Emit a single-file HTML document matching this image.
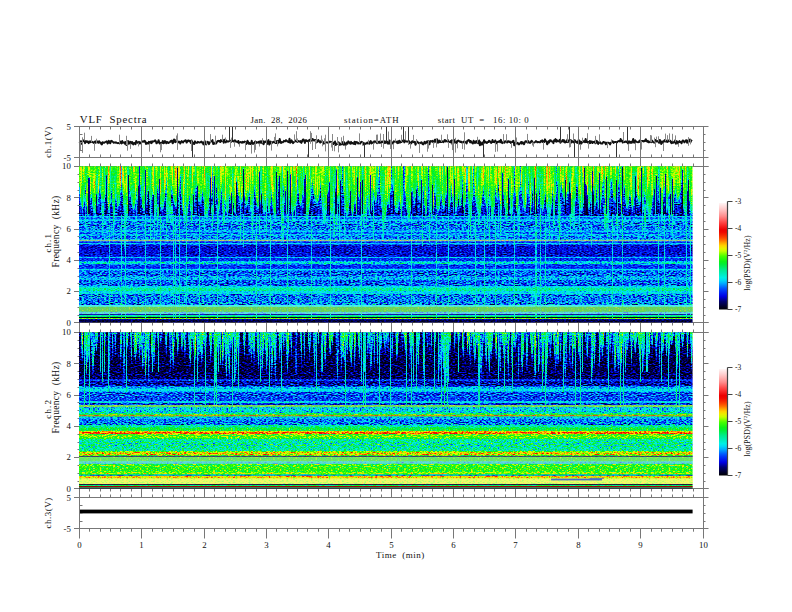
<!DOCTYPE html><html><head><meta charset="utf-8"><style>html,body{margin:0;padding:0;background:#fff;width:792px;height:612px;overflow:hidden}svg{display:block}text{font-family:"Liberation Serif",serif;fill:#111}</style></head><body>
<svg width="792" height="612" viewBox="0 0 792 612">
<rect width="792" height="612" fill="#fff"/>
<polyline points="79.5 143.0 80.2 141.4 80.9 141.3 81.6 143.9 82.3 141.5 83.0 140.2 83.7 141.3 84.4 140.7 85.1 143.2 85.8 141.3 86.5 141.2 87.2 142.0 87.9 141.3 88.6 143.2 89.3 142.5 90.0 141.2 90.7 142.3 91.4 141.6 92.1 141.7 92.8 142.2 93.5 142.9 94.2 142.0 94.9 141.6 95.6 142.8 96.3 141.0 97.0 142.3 97.7 141.5 98.4 142.8 99.1 141.2 99.8 142.6 100.5 142.4 101.2 143.9 101.9 144.4 102.6 142.1 103.3 142.6 104.0 142.9 104.7 142.4 105.4 142.0 106.1 141.7 106.8 141.3 107.5 143.5 108.2 142.8 108.9 140.8 109.6 142.5 110.3 143.3 111.0 141.0 111.7 140.8 112.4 141.7 113.1 142.0 113.8 142.8 114.5 142.4 115.2 142.8 115.9 142.3 116.6 142.8 117.3 143.2 118.0 143.0 118.7 143.2 119.4 143.5 120.1 141.4 120.8 142.3 121.5 143.4 122.2 141.0 122.9 142.7 123.6 142.6 124.3 142.3 125.0 143.8 125.7 141.9 126.4 145.1 127.1 141.2 127.8 144.3 128.5 141.1 129.2 142.6 129.9 143.6 130.6 141.8 131.3 143.2 132.0 141.9 132.7 143.9 133.4 144.5 134.1 142.8 134.8 143.4 135.5 144.2 136.2 140.9 136.9 142.0 137.6 142.8 138.3 142.9 139.0 141.7 139.7 143.5 140.4 143.4 141.1 142.2 141.8 142.0 142.5 141.5 143.2 141.1 143.9 141.8 144.6 140.8 145.3 141.4 146.0 144.0 146.7 142.8 147.4 143.3 148.1 143.6 148.8 141.8 149.5 143.4 150.2 141.8 150.9 141.5 151.6 143.2 152.3 141.3 153.0 141.7 153.7 141.3 154.4 141.3 155.1 140.3 155.8 141.2 156.5 143.4 157.2 142.2 157.9 142.5 158.6 140.1 159.3 142.7 160.0 143.7 160.7 142.7 161.4 143.3 162.1 143.0 162.8 140.9 163.5 143.3 164.2 143.0 164.9 141.0 165.6 142.0 166.3 143.3 167.0 141.8 167.7 142.2 168.4 143.1 169.1 142.5 169.8 142.4 170.5 141.1 171.2 141.6 171.9 140.5 172.6 143.4 173.3 142.6 174.0 139.5 174.7 139.6 175.4 142.2 176.1 141.5 176.8 140.7 177.5 141.0 178.2 142.4 178.9 141.7 179.6 141.8 180.3 143.6 181.0 142.2 181.7 141.1 182.4 141.8 183.1 142.5 183.8 141.1 184.5 141.1 185.2 140.3 185.9 140.4 186.6 142.6 187.3 141.7 188.0 140.4 188.7 140.5 189.4 141.3 190.1 140.9 190.8 143.0 191.5 140.4 192.2 142.1 192.9 142.6 193.6 143.8 194.3 144.0 195.0 141.3 195.7 142.5 196.4 142.9 197.1 142.9 197.8 141.8 198.5 142.1 199.2 142.5 199.9 142.5 200.6 142.0 201.3 141.6 202.0 142.6 202.7 142.4 203.4 144.4 204.1 142.6 204.8 141.0 205.5 144.0 206.2 144.4 206.9 142.2 207.6 141.7 208.3 142.2 209.0 144.2 209.7 142.6 210.4 142.1 211.1 141.4 211.8 141.0 212.5 140.1 213.2 144.1 213.9 143.4 214.6 143.7 215.3 142.3 216.0 143.6 216.7 142.5 217.4 141.1 218.1 140.8 218.8 141.3 219.5 140.9 220.2 142.1 220.9 140.1 221.6 141.2 222.3 140.8 223.0 140.3 223.7 142.8 224.4 139.8 225.1 141.0 225.8 142.4 226.5 140.6 227.2 141.5 227.9 141.7 228.6 141.5 229.3 141.1 230.0 140.7 230.7 140.6 231.4 141.7 232.1 139.6 232.8 141.1 233.5 141.2 234.2 141.7 234.9 140.2 235.6 141.5 236.3 141.7 237.0 141.5 237.7 142.3 238.4 140.9 239.1 143.4 239.8 142.3 240.5 142.0 241.2 142.2 241.9 142.8 242.6 141.7 243.3 142.5 244.0 142.1 244.7 141.5 245.4 141.9 246.1 144.1 246.8 143.5 247.5 140.7 248.2 141.9 248.9 143.8 249.6 143.0 250.3 144.0 251.0 144.2 251.7 140.7 252.4 143.8 253.1 142.9 253.8 143.8 254.5 142.7 255.2 141.4 255.9 143.2 256.6 142.1 257.3 142.5 258.0 142.4 258.7 141.8 259.4 143.4 260.1 141.2 260.8 142.4 261.5 141.3 262.2 143.3 262.9 140.9 263.6 144.3 264.3 142.2 265.0 141.5 265.7 142.0 266.4 141.0 267.1 144.0 267.8 142.2 268.5 140.1 269.2 144.6 269.9 142.5 270.6 141.6 271.3 143.8 272.0 142.2 272.7 142.5 273.4 141.8 274.1 141.5 274.8 142.5 275.5 143.1 276.2 143.0 276.9 141.0 277.6 143.5 278.3 140.9 279.0 142.5 279.7 139.0 280.4 141.8 281.1 143.0 281.8 142.0 282.5 142.3 283.2 142.2 283.9 140.8 284.6 141.3 285.3 141.4 286.0 140.1 286.7 140.7 287.4 141.5 288.1 141.9 288.8 142.2 289.5 138.7 290.2 142.9 290.9 142.3 291.6 140.3 292.3 141.7 293.0 143.2 293.7 142.3 294.4 141.6 295.1 141.6 295.8 140.5 296.5 141.0 297.2 142.0 297.9 141.6 298.6 141.0 299.3 141.3 300.0 141.9 300.7 141.0 301.4 142.9 302.1 141.3 302.8 139.7 303.5 139.4 304.2 141.1 304.9 142.9 305.6 140.1 306.3 140.1 307.0 141.1 307.7 141.4 308.4 140.8 309.1 140.1 309.8 141.0 310.5 139.2 311.2 140.2 311.9 140.8 312.6 139.0 313.3 139.8 314.0 140.5 314.7 139.9 315.4 140.0 316.1 142.5 316.8 141.1 317.5 141.9 318.2 140.0 318.9 140.8 319.6 141.6 320.3 142.6 321.0 141.4 321.7 140.4 322.4 142.0 323.1 141.9 323.8 143.7 324.5 143.3 325.2 142.5 325.9 142.3 326.6 142.4 327.3 142.7 328.0 142.4 328.7 142.5 329.4 141.7 330.1 141.8 330.8 141.9 331.5 142.2 332.2 143.4 332.9 142.5 333.6 144.1 334.3 143.2 335.0 141.5 335.7 145.0 336.4 144.2 337.1 144.0 337.8 142.5 338.5 142.3 339.2 142.9 339.9 144.9 340.6 143.8 341.3 144.4 342.0 142.0 342.7 143.6 343.4 144.7 344.1 142.2 344.8 143.8 345.5 145.4 346.2 143.3 346.9 142.5 347.6 143.7 348.3 141.3 349.0 142.1 349.7 142.9 350.4 143.8 351.1 141.8 351.8 143.4 352.5 142.9 353.2 143.6 353.9 143.9 354.6 141.6 355.3 144.3 356.0 141.9 356.7 142.6 357.4 142.3 358.1 143.6 358.8 143.2 359.5 142.6 360.2 143.6 360.9 142.1 361.6 141.7 362.3 142.3 363.0 142.6 363.7 144.5 364.4 143.3 365.1 144.0 365.8 143.4 366.5 143.5 367.2 142.4 367.9 143.5 368.6 142.9 369.3 143.7 370.0 141.9 370.7 141.0 371.4 143.6 372.1 142.3 372.8 142.8 373.5 143.1 374.2 141.3 374.9 141.6 375.6 141.4 376.3 142.4 377.0 143.2 377.7 141.9 378.4 141.8 379.1 142.9 379.8 141.5 380.5 141.6 381.2 143.2 381.9 141.4 382.6 142.1 383.3 141.6 384.0 143.2 384.7 141.3 385.4 142.9 386.1 141.5 386.8 141.7 387.5 143.5 388.2 141.4 388.9 143.7 389.6 140.5 390.3 143.5 391.0 142.6 391.7 143.6 392.4 142.4 393.1 143.4 393.8 141.2 394.5 141.6 395.2 141.6 395.9 141.7 396.6 141.6 397.3 143.2 398.0 141.2 398.7 142.9 399.4 140.7 400.1 142.6 400.8 141.8 401.5 142.1 402.2 140.6 402.9 140.7 403.6 140.8 404.3 142.4 405.0 140.3 405.7 141.2 406.4 141.6 407.1 141.4 407.8 141.8 408.5 141.4 409.2 141.2 409.9 143.2 410.6 142.6 411.3 143.4 412.0 141.4 412.7 141.2 413.4 142.1 414.1 142.2 414.8 141.7 415.5 144.8 416.2 143.4 416.9 141.3 417.6 142.4 418.3 142.4 419.0 143.4 419.7 143.3 420.4 143.0 421.1 142.3 421.8 142.4 422.5 144.1 423.2 144.4 423.9 143.1 424.6 141.8 425.3 143.6 426.0 142.5 426.7 141.5 427.4 143.2 428.1 141.1 428.8 142.3 429.5 144.3 430.2 141.0 430.9 141.6 431.6 141.3 432.3 140.8 433.0 142.1 433.7 142.5 434.4 140.6 435.1 139.5 435.8 141.9 436.5 141.4 437.2 139.3 437.9 142.9 438.6 142.3 439.3 140.6 440.0 142.2 440.7 141.2 441.4 142.0 442.1 141.2 442.8 141.8 443.5 142.3 444.2 140.9 444.9 139.9 445.6 141.5 446.3 141.0 447.0 141.3 447.7 139.9 448.4 142.0 449.1 142.1 449.8 142.0 450.5 141.1 451.2 142.6 451.9 140.3 452.6 144.5 453.3 141.0 454.0 139.8 454.7 141.3 455.4 143.1 456.1 141.4 456.8 142.9 457.5 141.0 458.2 140.5 458.9 141.2 459.6 141.2 460.3 142.0 461.0 141.5 461.7 142.6 462.4 142.5 463.1 142.6 463.8 141.4 464.5 141.4 465.2 142.1 465.9 142.5 466.6 143.4 467.3 140.8 468.0 140.8 468.7 139.9 469.4 140.5 470.1 142.3 470.8 141.0 471.5 142.6 472.2 142.7 472.9 143.5 473.6 140.6 474.3 142.5 475.0 143.2 475.7 141.6 476.4 141.1 477.1 142.8 477.8 141.4 478.5 143.3 479.2 140.5 479.9 145.4 480.6 142.3 481.3 144.6 482.0 144.6 482.7 142.5 483.4 142.9 484.1 140.1 484.8 142.7 485.5 141.7 486.2 142.4 486.9 143.1 487.6 142.0 488.3 142.0 489.0 140.7 489.7 141.1 490.4 142.1 491.1 143.0 491.8 142.4 492.5 140.0 493.2 142.1 493.9 141.7 494.6 142.2 495.3 140.4 496.0 142.6 496.7 143.3 497.4 141.8 498.1 142.0 498.8 141.4 499.5 141.1 500.2 142.3 500.9 139.8 501.6 142.5 502.3 143.2 503.0 142.4 503.7 141.6 504.4 142.8 505.1 141.2 505.8 141.5 506.5 141.2 507.2 142.4 507.9 141.3 508.6 141.2 509.3 142.0 510.0 141.6 510.7 142.9 511.4 142.1 512.1 142.1 512.8 141.1 513.5 140.8 514.2 145.4 514.9 143.5 515.6 142.7 516.3 143.6 517.0 143.1 517.7 142.7 518.4 144.4 519.1 144.3 519.8 143.5 520.5 142.9 521.2 141.9 521.9 143.7 522.6 142.2 523.3 143.1 524.0 144.3 524.7 142.6 525.4 141.3 526.1 141.2 526.8 141.9 527.5 142.6 528.2 141.0 528.9 142.4 529.6 142.9 530.3 142.9 531.0 141.4 531.7 140.7 532.4 142.2 533.1 142.6 533.8 142.8 534.5 142.4 535.2 142.0 535.9 141.1 536.6 141.5 537.3 142.4 538.0 142.1 538.7 142.0 539.4 142.4 540.1 142.4 540.8 141.0 541.5 141.4 542.2 140.2 542.9 142.1 543.6 141.3 544.3 142.0 545.0 139.3 545.7 141.1 546.4 141.3 547.1 144.4 547.8 143.2 548.5 141.2 549.2 142.4 549.9 140.1 550.6 140.1 551.3 141.3 552.0 141.5 552.7 141.4 553.4 143.2 554.1 140.1 554.8 141.0 555.5 139.1 556.2 141.8 556.9 140.1 557.6 141.4 558.3 141.2 559.0 141.3 559.7 139.7 560.4 142.9 561.1 141.6 561.8 141.5 562.5 140.1 563.2 141.4 563.9 140.1 564.6 142.4 565.3 142.5 566.0 141.3 566.7 142.1 567.4 139.4 568.1 142.2 568.8 140.7 569.5 141.5 570.2 140.1 570.9 140.1 571.6 142.5 572.3 141.6 573.0 141.0 573.7 142.4 574.4 140.1 575.1 140.3 575.8 142.0 576.5 141.8 577.2 142.9 577.9 141.9 578.6 140.1 579.3 140.5 580.0 143.9 580.7 141.7 581.4 143.5 582.1 142.0 582.8 141.0 583.5 141.8 584.2 141.3 584.9 142.3 585.6 138.9 586.3 142.1 587.0 140.8 587.7 142.6 588.4 142.1 589.1 143.3 589.8 140.9 590.5 143.0 591.2 141.7 591.9 141.4 592.6 143.1 593.3 141.9 594.0 142.0 594.7 141.4 595.4 143.3 596.1 142.6 596.8 140.8 597.5 142.9 598.2 143.9 598.9 142.2 599.6 141.6 600.3 143.0 601.0 143.6 601.7 143.2 602.4 143.6 603.1 142.2 603.8 141.9 604.5 142.5 605.2 142.4 605.9 144.3 606.6 142.6 607.3 142.7 608.0 142.9 608.7 142.7 609.4 143.3 610.1 144.4 610.8 142.8 611.5 142.4 612.2 141.3 612.9 141.4 613.6 142.9 614.3 142.3 615.0 141.9 615.7 141.9 616.4 142.2 617.1 142.3 617.8 141.4 618.5 141.2 619.2 141.0 619.9 141.6 620.6 138.9 621.3 141.1 622.0 140.5 622.7 142.6 623.4 141.7 624.1 141.8 624.8 142.2 625.5 141.5 626.2 141.5 626.9 142.3 627.6 142.8 628.3 143.7 629.0 141.3 629.7 141.5 630.4 142.8 631.1 141.9 631.8 142.8 632.5 141.2 633.2 139.0 633.9 142.5 634.6 142.7 635.3 140.3 636.0 141.7 636.7 141.7 637.4 142.1 638.1 142.3 638.8 142.0 639.5 140.6 640.2 142.0 640.9 141.0 641.6 141.4 642.3 140.9 643.0 141.0 643.7 141.5 644.4 140.7 645.1 141.1 645.8 139.2 646.5 140.8 647.2 141.7 647.9 140.8 648.6 142.3 649.3 142.2 650.0 141.8 650.7 140.9 651.4 142.2 652.1 140.6 652.8 141.8 653.5 142.3 654.2 142.7 654.9 141.6 655.6 139.9 656.3 141.3 657.0 141.6 657.7 141.0 658.4 141.6 659.1 142.9 659.8 140.0 660.5 140.7 661.2 144.0 661.9 142.5 662.6 141.4 663.3 142.7 664.0 140.9 664.7 140.1 665.4 141.2 666.1 141.7 666.8 140.6 667.5 142.0 668.2 140.4 668.9 141.3 669.6 140.6 670.3 140.7 671.0 142.7 671.7 143.2 672.4 141.4 673.1 142.7 673.8 142.6 674.5 141.9 675.2 140.3 675.9 143.7 676.6 141.2 677.3 141.5 678.0 143.4 678.7 142.0 679.4 141.1 680.1 142.1 680.8 142.0 681.5 143.3 682.2 141.4 682.9 140.4 683.6 141.1 684.3 142.4 685.0 141.8 685.7 140.4 686.4 140.2 687.1 142.8 687.8 141.2 688.5 139.9 689.2 141.5 689.9 139.5 690.6 142.0 691.3 140.4 692.0 141.1" fill="none" stroke="#111" stroke-width="1.9" stroke-linejoin="round"/>
<path d="M234.5 141.7v5.0M543.5 142.1v7.5M427.5 143.2v8.5M82.5 141.5v3.4M130.5 143.6v5.3M311.5 140.2v-7.3M455.5 141.3v-3.5M667.5 140.6v-5.4M390.5 140.5v8.5M408.5 141.8v3.2M567.5 142.1v-7.9M96.5 142.8v-4.1M294.5 141.6v-7.2M410.5 143.2v5.4M599.5 142.2v-7.9M464.5 141.4v8.3M312.5 140.8v9.2M688.5 141.2v-4.1M215.5 143.7v-8.0M297.5 142.0v-3.5M383.5 141.6v7.0M428.5 141.1v3.9M623.5 141.7v-9.7M533.5 142.6v4.2M373.5 142.8v6.8M91.5 142.3v-6.4M595.5 143.3v-7.4M331.5 142.2v5.3M259.5 143.4v3.1M338.5 142.5v9.9M457.5 142.9v5.4M532.5 142.2v3.3M655.5 141.6v5.6M239.5 143.4v3.3M126.5 145.1v-9.3M441.5 141.2v-6.5M607.5 142.6v5.5M380.5 141.5v-6.6M191.5 143.0v8.0M452.5 140.3v9.8M160.5 143.7v8.6M448.5 142.0v5.9M149.5 143.4v8.2M332.5 143.4v-9.4M582.5 142.0v-4.3M245.5 141.9v8.3M275.5 143.1v-9.7M161.5 143.3v6.8M80.5 143.0v7.5M225.5 141.0v-3.5M436.5 141.4v6.0M497.5 143.3v8.2M641.5 141.0v8.5M337.5 144.0v-7.0M343.5 143.6v-7.8M455.5 143.1v9.5M206.5 144.4v-3.5M413.5 141.2v-6.3M325.5 142.5v8.9M310.5 139.2v-8.0M380.5 141.5v-8.0M672.5 141.4v-7.6M377.5 143.2v-5.6M177.5 141.0v-7.6M262.5 143.3v-5.1M675.5 141.9v-6.5M516.5 143.6v-6.1M138.5 142.8v3.6M511.5 142.9v4.9M277.5 141.0v5.4M231.5 141.7v-4.1M393.5 143.4v5.8M381.5 143.2v3.8M176.5 141.5v-6.0M275.5 142.5v-6.6M191.5 140.4v8.8M405.5 140.3v-9.1M611.5 142.8v-3.5M651.5 142.2v-6.8M325.5 142.5v-7.8M341.5 143.8v-6.5M477.5 142.8v-6.0M82.5 143.9v-6.6M573.5 141.0v-7.5M84.5 140.7v-8.0M271.5 141.6v9.0M255.5 141.4v8.5M495.5 142.2v9.7M580.5 143.9v5.8M324.5 143.3v-5.0M628.5 143.7v7.2M254.5 143.8v8.7M94.5 142.9v7.9M436.5 141.9v-3.6M210.5 142.6v-8.5M678.5 143.4v3.4M322.5 140.4v5.9M119.5 143.5v-8.8M332.5 143.4v7.5M462.5 142.6v6.4M251.5 144.2v9.4M345.5 145.4v4.2M669.5 141.3v-7.9M296.5 141.0v-9.8M506.5 141.5v-7.3M447.5 141.3v-7.0M316.5 142.5v-7.2M368.5 143.5v-3.6M177.5 141.0v8.9M222.5 141.2v-6.5M650.5 141.8v-6.8M274.5 141.5v-4.6M230.5 140.7v7.2M690.5 139.5v4.9M315.5 139.9v9.1M408.5 141.8v-3.9M376.5 142.4v-7.7M359.5 143.2v-9.8M362.5 142.3v3.5M82.5 143.9v9.0M377.5 143.2v-8.7M663.5 142.7v8.3M127.5 141.2v9.5M570.5 140.1v7.0M588.5 142.6v6.0M383.5 142.1v-8.1M416.5 143.4v-4.3M578.5 141.9v3.9M665.5 141.2v-7.6M587.5 140.8v-7.6M656.5 139.9v-3.3M433.5 142.1v5.8M441.5 142.0v-6.8M334.5 144.1v7.2M321.5 141.4v-5.9M635.5 142.7v7.5M331.5 142.2v4.6M401.5 141.8v-7.0M688.5 141.2v4.6M419.5 143.4v9.5M569.5 140.7v6.9M464.5 141.4v-9.1M503.5 142.4v-8.3M428.5 141.1v7.5M395.5 141.6v-3.0M310.5 139.2v4.6M388.5 141.4v-9.9M527.5 142.6v-8.7M658.5 141.6v-5.3M654.5 142.3v-4.7" stroke="#888" stroke-width="1" fill="none"/>
<path d="M364.5 143.3V157.0M574.5 140.1V157.0M569.5 141.5V127.0M229.5 141.5V127.0M560.5 142.9V127.0M627.5 142.3V127.0M616.5 142.2V157.0M483.5 142.5V157.0M192.5 142.1V157.0M408.5 141.4V127.0M386.5 141.5V127.0M308.5 141.4V157.0M232.5 139.6V127.0M403.5 140.7V127.0" stroke="#333" stroke-width="1" fill="none"/>
<rect x="79.0" y="509.6" width="613.6" height="3.8" fill="#000"/>
<path d="M74 126.5H708.5M74 157.5H708.5M74 497.5H708.5M74 528.5H708.5M74 166.5H708.5M74 332.5H708.5M74 322.5H708.5M74 488.5H708.5M79.5 126.5V528.5M703.5 126.5V528.5M79.5 528.5v10.0M89.5 126.5v3.0M89.5 157.5v-3.0M89.5 166.5v-3.0M89.5 322.5v3.0M89.5 332.5v-3.0M89.5 488.5v3.0M89.5 497.5v-3.0M89.5 528.5v3.2M100.5 126.5v3.0M100.5 157.5v-3.0M100.5 166.5v-3.0M100.5 322.5v3.0M100.5 332.5v-3.0M100.5 488.5v3.0M100.5 497.5v-3.0M100.5 528.5v3.2M110.5 126.5v3.0M110.5 157.5v-3.0M110.5 166.5v-3.0M110.5 322.5v3.0M110.5 332.5v-3.0M110.5 488.5v3.0M110.5 497.5v-3.0M110.5 528.5v3.2M120.5 126.5v3.0M120.5 157.5v-3.0M120.5 166.5v-3.0M120.5 322.5v3.0M120.5 332.5v-3.0M120.5 488.5v3.0M120.5 497.5v-3.0M120.5 528.5v3.2M131.5 126.5v3.0M131.5 157.5v-3.0M131.5 166.5v-3.0M131.5 322.5v3.0M131.5 332.5v-3.0M131.5 488.5v3.0M131.5 497.5v-3.0M131.5 528.5v3.2M141.5 126.5V157.5M141.5 157.5V166.0M141.5 322.5V332.0M141.5 488.5V497.5M141.5 528.5v10.0M152.5 126.5v3.0M152.5 157.5v-3.0M152.5 166.5v-3.0M152.5 322.5v3.0M152.5 332.5v-3.0M152.5 488.5v3.0M152.5 497.5v-3.0M152.5 528.5v3.2M162.5 126.5v3.0M162.5 157.5v-3.0M162.5 166.5v-3.0M162.5 322.5v3.0M162.5 332.5v-3.0M162.5 488.5v3.0M162.5 497.5v-3.0M162.5 528.5v3.2M173.5 126.5v3.0M173.5 157.5v-3.0M173.5 166.5v-3.0M173.5 322.5v3.0M173.5 332.5v-3.0M173.5 488.5v3.0M173.5 497.5v-3.0M173.5 528.5v3.2M183.5 126.5v3.0M183.5 157.5v-3.0M183.5 166.5v-3.0M183.5 322.5v3.0M183.5 332.5v-3.0M183.5 488.5v3.0M183.5 497.5v-3.0M183.5 528.5v3.2M194.5 126.5v3.0M194.5 157.5v-3.0M194.5 166.5v-3.0M194.5 322.5v3.0M194.5 332.5v-3.0M194.5 488.5v3.0M194.5 497.5v-3.0M194.5 528.5v3.2M204.5 126.5V157.5M204.5 157.5V166.0M204.5 322.5V332.0M204.5 488.5V497.5M204.5 528.5v10.0M214.5 126.5v3.0M214.5 157.5v-3.0M214.5 166.5v-3.0M214.5 322.5v3.0M214.5 332.5v-3.0M214.5 488.5v3.0M214.5 497.5v-3.0M214.5 528.5v3.2M225.5 126.5v3.0M225.5 157.5v-3.0M225.5 166.5v-3.0M225.5 322.5v3.0M225.5 332.5v-3.0M225.5 488.5v3.0M225.5 497.5v-3.0M225.5 528.5v3.2M235.5 126.5v3.0M235.5 157.5v-3.0M235.5 166.5v-3.0M235.5 322.5v3.0M235.5 332.5v-3.0M235.5 488.5v3.0M235.5 497.5v-3.0M235.5 528.5v3.2M245.5 126.5v3.0M245.5 157.5v-3.0M245.5 166.5v-3.0M245.5 322.5v3.0M245.5 332.5v-3.0M245.5 488.5v3.0M245.5 497.5v-3.0M245.5 528.5v3.2M256.5 126.5v3.0M256.5 157.5v-3.0M256.5 166.5v-3.0M256.5 322.5v3.0M256.5 332.5v-3.0M256.5 488.5v3.0M256.5 497.5v-3.0M256.5 528.5v3.2M266.5 126.5V157.5M266.5 157.5V166.0M266.5 322.5V332.0M266.5 488.5V497.5M266.5 528.5v10.0M276.5 126.5v3.0M276.5 157.5v-3.0M276.5 166.5v-3.0M276.5 322.5v3.0M276.5 332.5v-3.0M276.5 488.5v3.0M276.5 497.5v-3.0M276.5 528.5v3.2M287.5 126.5v3.0M287.5 157.5v-3.0M287.5 166.5v-3.0M287.5 322.5v3.0M287.5 332.5v-3.0M287.5 488.5v3.0M287.5 497.5v-3.0M287.5 528.5v3.2M297.5 126.5v3.0M297.5 157.5v-3.0M297.5 166.5v-3.0M297.5 322.5v3.0M297.5 332.5v-3.0M297.5 488.5v3.0M297.5 497.5v-3.0M297.5 528.5v3.2M307.5 126.5v3.0M307.5 157.5v-3.0M307.5 166.5v-3.0M307.5 322.5v3.0M307.5 332.5v-3.0M307.5 488.5v3.0M307.5 497.5v-3.0M307.5 528.5v3.2M318.5 126.5v3.0M318.5 157.5v-3.0M318.5 166.5v-3.0M318.5 322.5v3.0M318.5 332.5v-3.0M318.5 488.5v3.0M318.5 497.5v-3.0M318.5 528.5v3.2M328.5 126.5V157.5M328.5 157.5V166.0M328.5 322.5V332.0M328.5 488.5V497.5M328.5 528.5v10.0M339.5 126.5v3.0M339.5 157.5v-3.0M339.5 166.5v-3.0M339.5 322.5v3.0M339.5 332.5v-3.0M339.5 488.5v3.0M339.5 497.5v-3.0M339.5 528.5v3.2M349.5 126.5v3.0M349.5 157.5v-3.0M349.5 166.5v-3.0M349.5 322.5v3.0M349.5 332.5v-3.0M349.5 488.5v3.0M349.5 497.5v-3.0M349.5 528.5v3.2M360.5 126.5v3.0M360.5 157.5v-3.0M360.5 166.5v-3.0M360.5 322.5v3.0M360.5 332.5v-3.0M360.5 488.5v3.0M360.5 497.5v-3.0M360.5 528.5v3.2M370.5 126.5v3.0M370.5 157.5v-3.0M370.5 166.5v-3.0M370.5 322.5v3.0M370.5 332.5v-3.0M370.5 488.5v3.0M370.5 497.5v-3.0M370.5 528.5v3.2M381.5 126.5v3.0M381.5 157.5v-3.0M381.5 166.5v-3.0M381.5 322.5v3.0M381.5 332.5v-3.0M381.5 488.5v3.0M381.5 497.5v-3.0M381.5 528.5v3.2M391.5 126.5V157.5M391.5 157.5V166.0M391.5 322.5V332.0M391.5 488.5V497.5M391.5 528.5v10.0M401.5 126.5v3.0M401.5 157.5v-3.0M401.5 166.5v-3.0M401.5 322.5v3.0M401.5 332.5v-3.0M401.5 488.5v3.0M401.5 497.5v-3.0M401.5 528.5v3.2M412.5 126.5v3.0M412.5 157.5v-3.0M412.5 166.5v-3.0M412.5 322.5v3.0M412.5 332.5v-3.0M412.5 488.5v3.0M412.5 497.5v-3.0M412.5 528.5v3.2M422.5 126.5v3.0M422.5 157.5v-3.0M422.5 166.5v-3.0M422.5 322.5v3.0M422.5 332.5v-3.0M422.5 488.5v3.0M422.5 497.5v-3.0M422.5 528.5v3.2M432.5 126.5v3.0M432.5 157.5v-3.0M432.5 166.5v-3.0M432.5 322.5v3.0M432.5 332.5v-3.0M432.5 488.5v3.0M432.5 497.5v-3.0M432.5 528.5v3.2M443.5 126.5v3.0M443.5 157.5v-3.0M443.5 166.5v-3.0M443.5 322.5v3.0M443.5 332.5v-3.0M443.5 488.5v3.0M443.5 497.5v-3.0M443.5 528.5v3.2M453.5 126.5V157.5M453.5 157.5V166.0M453.5 322.5V332.0M453.5 488.5V497.5M453.5 528.5v10.0M463.5 126.5v3.0M463.5 157.5v-3.0M463.5 166.5v-3.0M463.5 322.5v3.0M463.5 332.5v-3.0M463.5 488.5v3.0M463.5 497.5v-3.0M463.5 528.5v3.2M474.5 126.5v3.0M474.5 157.5v-3.0M474.5 166.5v-3.0M474.5 322.5v3.0M474.5 332.5v-3.0M474.5 488.5v3.0M474.5 497.5v-3.0M474.5 528.5v3.2M484.5 126.5v3.0M484.5 157.5v-3.0M484.5 166.5v-3.0M484.5 322.5v3.0M484.5 332.5v-3.0M484.5 488.5v3.0M484.5 497.5v-3.0M484.5 528.5v3.2M494.5 126.5v3.0M494.5 157.5v-3.0M494.5 166.5v-3.0M494.5 322.5v3.0M494.5 332.5v-3.0M494.5 488.5v3.0M494.5 497.5v-3.0M494.5 528.5v3.2M505.5 126.5v3.0M505.5 157.5v-3.0M505.5 166.5v-3.0M505.5 322.5v3.0M505.5 332.5v-3.0M505.5 488.5v3.0M505.5 497.5v-3.0M505.5 528.5v3.2M515.5 126.5V157.5M515.5 157.5V166.0M515.5 322.5V332.0M515.5 488.5V497.5M515.5 528.5v10.0M526.5 126.5v3.0M526.5 157.5v-3.0M526.5 166.5v-3.0M526.5 322.5v3.0M526.5 332.5v-3.0M526.5 488.5v3.0M526.5 497.5v-3.0M526.5 528.5v3.2M536.5 126.5v3.0M536.5 157.5v-3.0M536.5 166.5v-3.0M536.5 322.5v3.0M536.5 332.5v-3.0M536.5 488.5v3.0M536.5 497.5v-3.0M536.5 528.5v3.2M547.5 126.5v3.0M547.5 157.5v-3.0M547.5 166.5v-3.0M547.5 322.5v3.0M547.5 332.5v-3.0M547.5 488.5v3.0M547.5 497.5v-3.0M547.5 528.5v3.2M557.5 126.5v3.0M557.5 157.5v-3.0M557.5 166.5v-3.0M557.5 322.5v3.0M557.5 332.5v-3.0M557.5 488.5v3.0M557.5 497.5v-3.0M557.5 528.5v3.2M568.5 126.5v3.0M568.5 157.5v-3.0M568.5 166.5v-3.0M568.5 322.5v3.0M568.5 332.5v-3.0M568.5 488.5v3.0M568.5 497.5v-3.0M568.5 528.5v3.2M578.5 126.5V157.5M578.5 157.5V166.0M578.5 322.5V332.0M578.5 488.5V497.5M578.5 528.5v10.0M588.5 126.5v3.0M588.5 157.5v-3.0M588.5 166.5v-3.0M588.5 322.5v3.0M588.5 332.5v-3.0M588.5 488.5v3.0M588.5 497.5v-3.0M588.5 528.5v3.2M599.5 126.5v3.0M599.5 157.5v-3.0M599.5 166.5v-3.0M599.5 322.5v3.0M599.5 332.5v-3.0M599.5 488.5v3.0M599.5 497.5v-3.0M599.5 528.5v3.2M609.5 126.5v3.0M609.5 157.5v-3.0M609.5 166.5v-3.0M609.5 322.5v3.0M609.5 332.5v-3.0M609.5 488.5v3.0M609.5 497.5v-3.0M609.5 528.5v3.2M619.5 126.5v3.0M619.5 157.5v-3.0M619.5 166.5v-3.0M619.5 322.5v3.0M619.5 332.5v-3.0M619.5 488.5v3.0M619.5 497.5v-3.0M619.5 528.5v3.2M630.5 126.5v3.0M630.5 157.5v-3.0M630.5 166.5v-3.0M630.5 322.5v3.0M630.5 332.5v-3.0M630.5 488.5v3.0M630.5 497.5v-3.0M630.5 528.5v3.2M640.5 126.5V157.5M640.5 157.5V166.0M640.5 322.5V332.0M640.5 488.5V497.5M640.5 528.5v10.0M651.5 126.5v3.0M651.5 157.5v-3.0M651.5 166.5v-3.0M651.5 322.5v3.0M651.5 332.5v-3.0M651.5 488.5v3.0M651.5 497.5v-3.0M651.5 528.5v3.2M661.5 126.5v3.0M661.5 157.5v-3.0M661.5 166.5v-3.0M661.5 322.5v3.0M661.5 332.5v-3.0M661.5 488.5v3.0M661.5 497.5v-3.0M661.5 528.5v3.2M672.5 126.5v3.0M672.5 157.5v-3.0M672.5 166.5v-3.0M672.5 322.5v3.0M672.5 332.5v-3.0M672.5 488.5v3.0M672.5 497.5v-3.0M672.5 528.5v3.2M682.5 126.5v3.0M682.5 157.5v-3.0M682.5 166.5v-3.0M682.5 322.5v3.0M682.5 332.5v-3.0M682.5 488.5v3.0M682.5 497.5v-3.0M682.5 528.5v3.2M693.5 126.5v3.0M693.5 157.5v-3.0M693.5 166.5v-3.0M693.5 322.5v3.0M693.5 332.5v-3.0M693.5 488.5v3.0M693.5 497.5v-3.0M693.5 528.5v3.2M703.5 528.5v10.0M74 322.5H79.5M703.5 322.5H708.5M77.5 315.5H79.5M703.5 315.5h2M77.5 307.5H79.5M703.5 307.5h2M77.5 299.5H79.5M703.5 299.5h2M74 291.5H79.5M703.5 291.5H708.5M77.5 283.5H79.5M703.5 283.5h2M77.5 276.5H79.5M703.5 276.5h2M77.5 268.5H79.5M703.5 268.5h2M74 260.5H79.5M703.5 260.5H708.5M77.5 252.5H79.5M703.5 252.5h2M77.5 244.5H79.5M703.5 244.5h2M77.5 236.5H79.5M703.5 236.5h2M74 229.5H79.5M703.5 229.5H708.5M77.5 221.5H79.5M703.5 221.5h2M77.5 213.5H79.5M703.5 213.5h2M77.5 205.5H79.5M703.5 205.5h2M74 197.5H79.5M703.5 197.5H708.5M77.5 190.5H79.5M703.5 190.5h2M77.5 182.5H79.5M703.5 182.5h2M77.5 174.5H79.5M703.5 174.5h2M74 166.5H79.5M703.5 166.5H708.5M74 488.5H79.5M703.5 488.5H708.5M77.5 481.5H79.5M703.5 481.5h2M77.5 473.5H79.5M703.5 473.5h2M77.5 465.5H79.5M703.5 465.5h2M74 457.5H79.5M703.5 457.5H708.5M77.5 449.5H79.5M703.5 449.5h2M77.5 442.5H79.5M703.5 442.5h2M77.5 434.5H79.5M703.5 434.5h2M74 426.5H79.5M703.5 426.5H708.5M77.5 418.5H79.5M703.5 418.5h2M77.5 410.5H79.5M703.5 410.5h2M77.5 402.5H79.5M703.5 402.5h2M74 395.5H79.5M703.5 395.5H708.5M77.5 387.5H79.5M703.5 387.5h2M77.5 379.5H79.5M703.5 379.5h2M77.5 371.5H79.5M703.5 371.5h2M74 363.5H79.5M703.5 363.5H708.5M77.5 356.5H79.5M703.5 356.5h2M77.5 348.5H79.5M703.5 348.5h2M77.5 340.5H79.5M703.5 340.5h2M74 332.5H79.5M703.5 332.5H708.5M79.5 134.5h3M703.5 134.5h2M79.5 142.5h3M703.5 142.5h2M79.5 150.5h3M703.5 150.5h2M79.5 505.5h3M703.5 505.5h2M79.5 513.5h3M703.5 513.5h2M79.5 521.5h3M703.5 521.5h2" stroke="#777777" stroke-width="1" fill="none"/>
<filter id="cm1" filterUnits="userSpaceOnUse" x="79.0" y="166.2" width="613.6" height="156.2" color-interpolation-filters="sRGB">
<feTurbulence type="fractalNoise" baseFrequency="0.45 1.1" numOctaves="1" seed="14" result="n"/>
<feColorMatrix in="n" type="matrix" values="1 0 0 0 0 1 0 0 0 0 1 0 0 0 0 0 0 0 0 1" result="ng"/>
<feTurbulence type="fractalNoise" baseFrequency="0.6 0.025" numOctaves="2" seed="18" result="n2"/>
<feColorMatrix in="n2" type="matrix" values="1 0 0 0 0 1 0 0 0 0 1 0 0 0 0 0 0 0 0 1" result="ng2"/>
<feColorMatrix in="SourceGraphic" type="matrix" values="0 1 0 0 0 0 1 0 0 0 0 1 0 0 0 0 0 0 0 1" result="amp"/>
<feColorMatrix in="SourceGraphic" type="matrix" values="0 0 1 0 0 0 0 1 0 0 0 0 1 0 0 0 0 0 0 1" result="amp2"/>
<feComposite in="amp" in2="ng" operator="arithmetic" k1="2.4" k2="-1.2" k3="0" k4="0.5" result="nz"/>
<feComposite in="amp2" in2="ng2" operator="arithmetic" k1="1.6" k2="-0.8" k3="0" k4="0.5" result="nz2"/>
<feColorMatrix in="SourceGraphic" type="matrix" values="1 0 0 0 0 1 0 0 0 0 1 0 0 0 0 0 0 0 0 1" result="val"/>
<feComposite in="val" in2="nz" operator="arithmetic" k1="0" k2="1" k3="1" k4="-0.5" result="sum"/>
<feComposite in="sum" in2="nz2" operator="arithmetic" k1="0" k2="1" k3="1" k4="-0.5" result="sum2"/>
<feComponentTransfer in="sum2"><feFuncR type="table" tableValues="0.000 0.000 0.000 0.000 0.000 0.000 0.000 0.000 0.000 0.000 0.000 0.000 0.000 0.000 0.000 0.000 0.000 0.000 0.000 0.000 0.000 0.000 0.000 0.000 0.000 0.000 0.000 0.000 0.000 0.000 0.000 0.000 0.000 0.000 0.000 0.000 0.046 0.103 0.160 0.217 0.275 0.402 0.529 0.657 0.784 0.852 0.919 0.987 1.000 1.000 1.000 1.000 1.000 0.998 0.985 0.973 0.961 0.949 0.938 0.930 0.922 0.938 0.954 0.971 0.987 1.000 1.000 1.000 1.000 1.000 1.000 1.000 1.000 1.000 1.000 1.000 1.000 1.000 1.000 1.000 1.000"/><feFuncG type="table" tableValues="0.000 0.000 0.000 0.000 0.000 0.000 0.000 0.000 0.000 0.000 0.000 0.053 0.106 0.158 0.211 0.264 0.346 0.436 0.526 0.616 0.706 0.779 0.853 0.926 0.939 0.936 0.933 0.930 0.927 0.924 0.922 0.925 0.929 0.933 0.937 0.940 0.951 0.963 0.975 0.988 1.000 1.000 1.000 1.000 1.000 0.969 0.939 0.908 0.829 0.738 0.647 0.542 0.437 0.340 0.275 0.209 0.144 0.078 0.033 0.016 0.000 0.049 0.098 0.147 0.196 0.247 0.308 0.368 0.428 0.489 0.549 0.594 0.640 0.685 0.730 0.775 0.814 0.850 0.887 0.924 0.961"/><feFuncB type="table" tableValues="0.000 0.072 0.144 0.216 0.288 0.359 0.431 0.549 0.667 0.784 0.902 0.921 0.940 0.959 0.977 0.996 1.000 1.000 1.000 1.000 1.000 0.982 0.963 0.945 0.895 0.837 0.780 0.722 0.664 0.607 0.549 0.466 0.383 0.300 0.217 0.134 0.098 0.074 0.049 0.025 0.000 0.000 0.000 0.000 0.000 0.000 0.000 0.000 0.000 0.000 0.000 0.000 0.000 0.000 0.000 0.000 0.000 0.000 0.000 0.000 0.000 0.049 0.098 0.147 0.196 0.247 0.308 0.368 0.428 0.489 0.549 0.594 0.640 0.685 0.730 0.775 0.814 0.850 0.887 0.924 0.961"/><feFuncA type="identity"/></feComponentTransfer>
</filter>
<clipPath id="cl1"><rect x="79.0" y="166.2" width="613.6" height="156.2"/></clipPath>
<g clip-path="url(#cl1)"><g filter="url(#cm1)">
<rect x="79.0" y="166.00" width="613.6" height="48.00" fill="#1d4000"/>
<rect x="79.0" y="214.00" width="613.6" height="1.80" fill="#232100"/>
<rect x="79.0" y="215.80" width="613.6" height="1.50" fill="#461f00"/>
<rect x="79.0" y="217.30" width="613.6" height="2.20" fill="#332e00"/>
<rect x="79.0" y="219.50" width="613.6" height="1.50" fill="#461f00"/>
<rect x="79.0" y="221.00" width="613.6" height="9.50" fill="#364700"/>
<rect x="79.0" y="230.50" width="613.6" height="1.50" fill="#431f00"/>
<rect x="79.0" y="232.00" width="613.6" height="2.30" fill="#332e00"/>
<rect x="79.0" y="234.30" width="613.6" height="1.30" fill="#461f00"/>
<rect x="79.0" y="235.60" width="613.6" height="4.20" fill="#364000"/>
<rect x="79.0" y="239.80" width="613.6" height="1.50" fill="#734c00"/>
<rect x="79.0" y="241.30" width="613.6" height="1.70" fill="#292100"/>
<rect x="79.0" y="243.00" width="613.6" height="1.60" fill="#461f00"/>
<rect x="79.0" y="244.60" width="613.6" height="12.20" fill="#1f2900"/>
<rect x="79.0" y="256.80" width="613.6" height="1.20" fill="#431f00"/>
<rect x="79.0" y="258.00" width="613.6" height="3.50" fill="#292400"/>
<rect x="79.0" y="261.50" width="613.6" height="3.00" fill="#4d3800"/>
<rect x="79.0" y="264.50" width="613.6" height="4.30" fill="#292400"/>
<rect x="79.0" y="268.80" width="613.6" height="1.80" fill="#461f00"/>
<rect x="79.0" y="270.60" width="613.6" height="5.90" fill="#304000"/>
<rect x="79.0" y="276.50" width="613.6" height="3.50" fill="#403300"/>
<rect x="79.0" y="280.00" width="613.6" height="6.20" fill="#304000"/>
<rect x="79.0" y="286.20" width="613.6" height="1.60" fill="#491f00"/>
<rect x="79.0" y="287.80" width="613.6" height="3.20" fill="#593300"/>
<rect x="79.0" y="291.00" width="613.6" height="1.30" fill="#462600"/>
<rect x="79.0" y="292.30" width="613.6" height="2.00" fill="#491f00"/>
<rect x="79.0" y="294.30" width="613.6" height="10.90" fill="#364c00"/>
<rect x="79.0" y="305.20" width="613.6" height="1.60" fill="#4d1400"/>
<rect x="79.0" y="306.80" width="613.6" height="5.00" fill="#732600"/>
<rect x="79.0" y="311.80" width="613.6" height="2.40" fill="#462900"/>
<rect x="79.0" y="314.20" width="613.6" height="0.70" fill="#060800"/>
<rect x="79.0" y="314.90" width="613.6" height="0.90" fill="#701a00"/>
<rect x="79.0" y="315.80" width="613.6" height="0.50" fill="#060800"/>
<rect x="79.0" y="316.30" width="613.6" height="0.80" fill="#701a00"/>
<rect x="79.0" y="317.10" width="613.6" height="1.20" fill="#060800"/>
<rect x="79.0" y="318.30" width="613.6" height="1.00" fill="#931a00"/>
<rect x="79.0" y="319.30" width="613.6" height="3.20" fill="#0a1f00"/>
<linearGradient id="gd1" gradientUnits="userSpaceOnUse" x1="0" y1="166" x2="0" y2="216"><stop offset="0" stop-color="#464033"/><stop offset="0.6" stop-color="#294026"/><stop offset="1" stop-color="#1d401a"/></linearGradient>
<rect x="79.0" y="160" width="613.6" height="55.8" fill="url(#gd1)"/>
<filter id="bl1" filterUnits="userSpaceOnUse" x="70" y="100" width="650" height="250"><feGaussianBlur stdDeviation="0.6 2.5"/></filter>
<g filter="url(#bl1)">
<linearGradient id="gg1" gradientUnits="userSpaceOnUse" x1="0" y1="166" x2="0" y2="216"><stop offset="0" stop-color="#7c1f4c"/><stop offset="0.45" stop-color="#761f4c"/><stop offset="0.75" stop-color="#692640"/><stop offset="1" stop-color="#532e33"/></linearGradient>
<path fill="url(#gg1)" d="M79 160h1V185.5h-1zM80 160h1V198.8h-1zM81 160h1V206.8h-1zM82 160h1V209.6h-1zM83 160h1V207.2h-1zM84 160h1V199.5h-1zM85 160h1V186.6h-1zM86 160h1V203.9h-1zM87 160h1V213.8h-1zM88 160h1V216.0h-1zM89 160h1V210.5h-1zM90 160h1V197.4h-1zM91 160h1V196.6h-1zM92 160h1V206.3h-1zM93 160h1V212.6h-1zM94 160h1V215.6h-1zM95 160h1V215.2h-1zM96 160h1V211.4h-1zM97 160h1V204.3h-1zM98 160h1V193.8h-1zM99 160h1V187.3h-1zM100 160h1V194.3h-1zM101 160h1V199.0h-1zM102 160h1V201.5h-1zM103 160h1V201.8h-1zM104 160h1V199.8h-1zM105 160h1V195.5h-1zM106 160h1V189.0h-1zM107 160h1V200.8h-1zM108 160h1V208.6h-1zM109 160h1V209.4h-1zM110 160h1V203.1h-1zM111 160h1V189.7h-1zM112 160h1V206.5h-1zM113 160h1V217.7h-1zM114 160h1V214.5h-1zM115 160h1V196.9h-1zM116 160h1V199.0h-1zM117 160h1V207.4h-1zM118 160h1V208.7h-1zM119 160h1V202.9h-1zM120 160h1V189.9h-1zM122 160h1V190.7h-1zM123 160h1V207.0h-1zM124 160h1V217.5h-1zM125 160h1V222.4h-1zM126 160h1V221.7h-1zM127 160h1V215.3h-1zM128 160h1V203.2h-1zM129 160h1V185.5h-1zM130 160h1V193.4h-1zM131 160h1V202.1h-1zM132 160h1V207.2h-1zM133 160h1V208.8h-1zM134 160h1V206.7h-1zM135 160h1V201.1h-1zM136 160h1V192.0h-1zM137 160h1V198.1h-1zM138 160h1V213.4h-1zM139 160h1V198.0h-1zM140 160h1V186.1h-1zM141 160h1V198.0h-1zM142 160h1V206.2h-1zM143 160h1V210.7h-1zM144 160h1V211.4h-1zM145 160h1V208.4h-1zM146 160h1V201.7h-1zM147 160h1V191.3h-1zM148 160h1V189.6h-1zM149 160h1V197.0h-1zM150 160h1V200.2h-1zM151 160h1V199.1h-1zM152 160h1V193.8h-1zM153 160h1V197.3h-1zM154 160h1V214.0h-1zM155 160h1V217.8h-1zM156 160h1V208.9h-1zM157 160h1V187.2h-1zM158 160h1V191.8h-1zM159 160h1V200.7h-1zM160 160h1V206.6h-1zM161 160h1V209.4h-1zM162 160h1V209.2h-1zM163 160h1V205.9h-1zM164 160h1V199.5h-1zM165 160h1V190.2h-1zM166 160h1V177.7h-1zM167 160h1V201.2h-1zM168 160h1V217.0h-1zM169 160h1V220.6h-1zM170 160h1V212.0h-1zM171 160h1V191.0h-1zM172 160h1V192.8h-1zM173 160h1V199.7h-1zM174 160h1V204.0h-1zM175 160h1V205.7h-1zM176 160h1V204.9h-1zM177 160h1V201.6h-1zM178 160h1V195.7h-1zM179 160h1V187.2h-1zM180 160h1V176.2h-1zM181 160h1V194.6h-1zM182 160h1V207.0h-1zM183 160h1V215.8h-1zM184 160h1V220.9h-1zM185 160h1V222.4h-1zM186 160h1V220.2h-1zM187 160h1V214.3h-1zM188 160h1V204.8h-1zM189 160h1V197.1h-1zM190 160h1V207.5h-1zM191 160h1V213.0h-1zM192 160h1V213.8h-1zM193 160h1V209.7h-1zM194 160h1V200.7h-1zM195 160h1V187.0h-1zM196 160h1V186.3h-1zM197 160h1V194.4h-1zM198 160h1V199.5h-1zM199 160h1V201.7h-1zM200 160h1V200.9h-1zM201 160h1V197.3h-1zM202 160h1V190.6h-1zM203 160h1V198.7h-1zM204 160h1V210.0h-1zM205 160h1V216.6h-1zM206 160h1V218.4h-1zM207 160h1V215.6h-1zM208 160h1V208.0h-1zM209 160h1V195.7h-1zM210 160h1V203.0h-1zM211 160h1V196.4h-1zM213 160h1V204.3h-1zM214 160h1V214.8h-1zM215 160h1V201.0h-1zM216 160h1V185.6h-1zM217 160h1V198.8h-1zM218 160h1V205.7h-1zM219 160h1V206.3h-1zM220 160h1V200.6h-1zM221 160h1V188.6h-1zM222 160h1V209.4h-1zM223 160h1V216.0h-1zM224 160h1V199.5h-1zM225 160h1V201.4h-1zM226 160h1V212.9h-1zM227 160h1V215.9h-1zM228 160h1V210.6h-1zM229 160h1V196.8h-1zM230 160h1V201.8h-1zM231 160h1V216.0h-1zM232 160h1V216.1h-1zM233 160h1V202.2h-1zM234 160h1V213.1h-1zM235 160h1V212.0h-1zM236 160h1V179.0h-1zM237 160h1V183.6h-1zM238 160h1V194.1h-1zM239 160h1V200.6h-1zM240 160h1V203.3h-1zM241 160h1V202.1h-1zM242 160h1V197.0h-1zM243 160h1V188.0h-1zM244 160h1V192.4h-1zM245 160h1V202.2h-1zM246 160h1V205.9h-1zM247 160h1V203.6h-1zM248 160h1V195.2h-1zM249 160h1V191.6h-1zM250 160h1V209.5h-1zM251 160h1V216.7h-1zM252 160h1V213.2h-1zM253 160h1V199.0h-1zM254 160h1V185.8h-1zM255 160h1V196.0h-1zM256 160h1V203.1h-1zM257 160h1V207.3h-1zM258 160h1V208.5h-1zM259 160h1V206.8h-1zM260 160h1V202.0h-1zM261 160h1V194.3h-1zM262 160h1V201.4h-1zM263 160h1V211.4h-1zM264 160h1V214.6h-1zM265 160h1V211.2h-1zM266 160h1V201.2h-1zM267 160h1V199.1h-1zM268 160h1V210.3h-1zM269 160h1V212.0h-1zM270 160h1V204.0h-1zM271 160h1V191.8h-1zM272 160h1V205.6h-1zM273 160h1V214.2h-1zM274 160h1V217.6h-1zM275 160h1V215.8h-1zM276 160h1V208.9h-1zM277 160h1V196.8h-1zM278 160h1V179.5h-1zM279 160h1V192.5h-1zM280 160h1V209.9h-1zM281 160h1V213.0h-1zM282 160h1V201.7h-1zM283 160h1V186.9h-1zM284 160h1V201.6h-1zM285 160h1V211.3h-1zM286 160h1V216.0h-1zM287 160h1V215.5h-1zM288 160h1V210.1h-1zM289 160h1V199.5h-1zM290 160h1V189.2h-1zM291 160h1V213.8h-1zM292 160h1V221.5h-1zM293 160h1V212.1h-1zM294 160h1V208.0h-1zM295 160h1V221.4h-1zM296 160h1V205.1h-1zM297 160h1V176.8h-1zM298 160h1V192.8h-1zM299 160h1V202.4h-1zM300 160h1V205.5h-1zM301 160h1V202.2h-1zM302 160h1V192.5h-1zM303 160h1V196.2h-1zM304 160h1V206.9h-1zM305 160h1V214.1h-1zM306 160h1V218.0h-1zM307 160h1V218.4h-1zM308 160h1V215.5h-1zM309 160h1V209.2h-1zM310 160h1V199.5h-1zM311 160h1V186.4h-1zM312 160h1V180.9h-1zM313 160h1V190.5h-1zM314 160h1V197.6h-1zM315 160h1V202.1h-1zM316 160h1V204.0h-1zM317 160h1V203.4h-1zM318 160h1V200.3h-1zM319 160h1V194.5h-1zM320 160h1V186.2h-1zM321 160h1V198.3h-1zM322 160h1V212.6h-1zM323 160h1V221.0h-1zM324 160h1V223.5h-1zM325 160h1V220.2h-1zM326 160h1V211.0h-1zM327 160h1V196.0h-1zM328 160h1V190.4h-1zM329 160h1V202.7h-1zM330 160h1V210.7h-1zM331 160h1V214.4h-1zM332 160h1V213.7h-1zM333 160h1V208.8h-1zM334 160h1V199.5h-1zM335 160h1V185.9h-1zM336 160h1V193.4h-1zM337 160h1V199.1h-1zM338 160h1V200.9h-1zM339 160h1V198.6h-1zM340 160h1V192.3h-1zM341 160h1V182.1h-1zM343 160h1V192.1h-1zM344 160h1V203.8h-1zM345 160h1V211.4h-1zM346 160h1V215.0h-1zM347 160h1V214.6h-1zM348 160h1V210.1h-1zM349 160h1V201.7h-1zM350 160h1V198.4h-1zM351 160h1V210.4h-1zM352 160h1V215.0h-1zM353 160h1V212.2h-1zM354 160h1V201.9h-1zM355 160h1V203.7h-1zM356 160h1V215.2h-1zM357 160h1V213.0h-1zM358 160h1V197.0h-1zM359 160h1V197.9h-1zM360 160h1V208.5h-1zM361 160h1V215.8h-1zM362 160h1V219.8h-1zM363 160h1V220.3h-1zM364 160h1V217.6h-1zM365 160h1V211.4h-1zM366 160h1V201.9h-1zM367 160h1V198.6h-1zM368 160h1V208.3h-1zM369 160h1V213.6h-1zM370 160h1V214.4h-1zM371 160h1V210.8h-1zM372 160h1V202.8h-1zM373 160h1V190.3h-1zM374 160h1V197.8h-1zM375 160h1V201.8h-1zM376 160h1V200.0h-1zM377 160h1V192.6h-1zM378 160h1V179.4h-1zM380 160h1V194.6h-1zM381 160h1V206.5h-1zM382 160h1V214.8h-1zM383 160h1V219.6h-1zM384 160h1V220.8h-1zM385 160h1V218.4h-1zM386 160h1V212.4h-1zM387 160h1V202.9h-1zM388 160h1V205.1h-1zM389 160h1V206.5h-1zM390 160h1V189.8h-1zM392 160h1V182.1h-1zM393 160h1V194.6h-1zM394 160h1V203.8h-1zM395 160h1V209.8h-1zM396 160h1V212.6h-1zM397 160h1V212.2h-1zM398 160h1V208.5h-1zM399 160h1V201.6h-1zM400 160h1V206.4h-1zM401 160h1V218.5h-1zM402 160h1V208.3h-1zM405 160h1V194.5h-1zM406 160h1V208.1h-1zM407 160h1V216.6h-1zM408 160h1V220.0h-1zM409 160h1V218.3h-1zM410 160h1V211.5h-1zM411 160h1V199.7h-1zM412 160h1V188.6h-1zM413 160h1V197.7h-1zM414 160h1V200.6h-1zM415 160h1V197.4h-1zM416 160h1V188.0h-1zM417 160h1V184.2h-1zM418 160h1V193.2h-1zM419 160h1V198.8h-1zM420 160h1V200.9h-1zM421 160h1V199.6h-1zM422 160h1V194.8h-1zM423 160h1V186.6h-1zM424 160h1V206.1h-1zM425 160h1V217.3h-1zM426 160h1V214.1h-1zM427 160h1V196.5h-1zM429 160h1V189.5h-1zM430 160h1V210.8h-1zM431 160h1V221.5h-1zM432 160h1V221.4h-1zM433 160h1V210.8h-1zM434 160h1V189.4h-1zM435 160h1V196.5h-1zM436 160h1V206.0h-1zM437 160h1V211.0h-1zM438 160h1V211.6h-1zM439 160h1V207.8h-1zM440 160h1V199.5h-1zM441 160h1V194.4h-1zM442 160h1V205.2h-1zM443 160h1V209.4h-1zM444 160h1V207.1h-1zM445 160h1V198.1h-1zM446 160h1V193.8h-1zM447 160h1V204.9h-1zM448 160h1V209.7h-1zM449 160h1V208.2h-1zM450 160h1V200.4h-1zM451 160h1V186.3h-1zM452 160h1V198.2h-1zM453 160h1V208.4h-1zM454 160h1V214.3h-1zM455 160h1V215.9h-1zM456 160h1V213.1h-1zM457 160h1V205.9h-1zM458 160h1V194.4h-1zM459 160h1V205.9h-1zM460 160h1V207.5h-1zM461 160h1V196.9h-1zM462 160h1V178.2h-1zM463 160h1V206.0h-1zM464 160h1V214.6h-1zM465 160h1V204.0h-1zM468 160h1V203.2h-1zM469 160h1V218.8h-1zM470 160h1V223.3h-1zM471 160h1V216.8h-1zM472 160h1V199.3h-1zM474 160h1V185.4h-1zM475 160h1V198.6h-1zM476 160h1V208.3h-1zM477 160h1V214.7h-1zM478 160h1V217.6h-1zM479 160h1V217.1h-1zM480 160h1V213.2h-1zM481 160h1V205.8h-1zM482 160h1V195.1h-1zM483 160h1V187.3h-1zM484 160h1V197.8h-1zM485 160h1V204.3h-1zM486 160h1V206.6h-1zM487 160h1V204.8h-1zM488 160h1V198.9h-1zM489 160h1V188.9h-1zM490 160h1V204.7h-1zM491 160h1V217.8h-1zM492 160h1V222.5h-1zM493 160h1V218.9h-1zM494 160h1V206.9h-1zM495 160h1V186.6h-1zM496 160h1V196.3h-1zM497 160h1V198.8h-1zM498 160h1V183.9h-1zM499 160h1V198.5h-1zM500 160h1V206.9h-1zM501 160h1V209.0h-1zM502 160h1V204.8h-1zM503 160h1V194.3h-1zM504 160h1V207.3h-1zM505 160h1V218.9h-1zM506 160h1V221.1h-1zM507 160h1V213.9h-1zM508 160h1V197.3h-1zM509 160h1V194.6h-1zM510 160h1V214.9h-1zM511 160h1V221.3h-1zM512 160h1V213.8h-1zM513 160h1V192.4h-1zM515 160h1V193.5h-1zM516 160h1V210.5h-1zM517 160h1V215.5h-1zM518 160h1V208.6h-1zM519 160h1V189.8h-1zM521 160h1V186.4h-1zM522 160h1V198.9h-1zM523 160h1V206.8h-1zM524 160h1V210.2h-1zM525 160h1V209.0h-1zM526 160h1V203.3h-1zM527 160h1V193.0h-1zM528 160h1V178.2h-1zM529 160h1V196.0h-1zM530 160h1V214.6h-1zM531 160h1V206.6h-1zM532 160h1V189.9h-1zM533 160h1V201.5h-1zM534 160h1V208.9h-1zM535 160h1V212.3h-1zM536 160h1V211.7h-1zM537 160h1V206.9h-1zM538 160h1V198.0h-1zM539 160h1V187.9h-1zM540 160h1V199.9h-1zM541 160h1V207.1h-1zM542 160h1V209.4h-1zM543 160h1V207.0h-1zM544 160h1V199.7h-1zM545 160h1V194.2h-1zM546 160h1V207.8h-1zM547 160h1V216.8h-1zM548 160h1V221.0h-1zM549 160h1V220.6h-1zM550 160h1V215.5h-1zM551 160h1V205.6h-1zM552 160h1V191.1h-1zM553 160h1V208.4h-1zM554 160h1V214.5h-1zM555 160h1V199.2h-1zM557 160h1V183.1h-1zM558 160h1V211.9h-1zM559 160h1V214.8h-1zM560 160h1V191.8h-1zM561 160h1V183.9h-1zM562 160h1V192.1h-1zM563 160h1V197.6h-1zM564 160h1V200.4h-1zM565 160h1V200.5h-1zM566 160h1V197.9h-1zM567 160h1V192.7h-1zM568 160h1V193.3h-1zM569 160h1V206.2h-1zM570 160h1V215.2h-1zM571 160h1V220.1h-1zM572 160h1V221.0h-1zM573 160h1V217.9h-1zM574 160h1V210.7h-1zM575 160h1V199.5h-1zM576 160h1V184.3h-1zM577 160h1V186.2h-1zM578 160h1V198.6h-1zM579 160h1V207.0h-1zM580 160h1V211.4h-1zM581 160h1V211.9h-1zM582 160h1V208.4h-1zM583 160h1V201.0h-1zM584 160h1V189.6h-1zM585 160h1V196.2h-1zM586 160h1V202.7h-1zM587 160h1V206.5h-1zM588 160h1V207.4h-1zM589 160h1V205.5h-1zM590 160h1V200.7h-1zM591 160h1V193.2h-1zM592 160h1V182.8h-1zM593 160h1V187.7h-1zM594 160h1V205.9h-1zM595 160h1V205.9h-1zM596 160h1V187.6h-1zM597 160h1V199.3h-1zM598 160h1V208.1h-1zM599 160h1V210.9h-1zM600 160h1V207.7h-1zM601 160h1V198.5h-1zM602 160h1V183.3h-1zM603 160h1V179.1h-1zM604 160h1V197.3h-1zM605 160h1V209.5h-1zM606 160h1V215.7h-1zM607 160h1V215.7h-1zM608 160h1V209.8h-1zM609 160h1V197.8h-1zM610 160h1V179.7h-1zM611 160h1V179.4h-1zM612 160h1V189.7h-1zM613 160h1V196.8h-1zM614 160h1V200.6h-1zM615 160h1V201.3h-1zM616 160h1V198.7h-1zM617 160h1V192.8h-1zM618 160h1V183.8h-1zM620 160h1V201.2h-1zM621 160h1V213.4h-1zM622 160h1V210.1h-1zM623 160h1V191.3h-1zM624 160h1V184.7h-1zM625 160h1V199.1h-1zM626 160h1V207.3h-1zM627 160h1V209.3h-1zM628 160h1V205.2h-1zM629 160h1V194.9h-1zM630 160h1V196.1h-1zM631 160h1V205.4h-1zM632 160h1V208.6h-1zM633 160h1V205.7h-1zM634 160h1V196.8h-1zM635 160h1V181.8h-1zM636 160h1V191.0h-1zM637 160h1V197.8h-1zM638 160h1V201.6h-1zM639 160h1V202.4h-1zM640 160h1V200.4h-1zM641 160h1V195.4h-1zM642 160h1V197.8h-1zM643 160h1V209.4h-1zM644 160h1V193.0h-1zM645 160h1V195.8h-1zM646 160h1V206.4h-1zM647 160h1V213.6h-1zM648 160h1V217.3h-1zM649 160h1V217.7h-1zM650 160h1V214.6h-1zM651 160h1V208.1h-1zM652 160h1V198.2h-1zM653 160h1V194.2h-1zM654 160h1V212.5h-1zM655 160h1V217.0h-1zM656 160h1V207.7h-1zM657 160h1V184.6h-1zM659 160h1V200.8h-1zM660 160h1V217.6h-1zM661 160h1V222.5h-1zM662 160h1V215.5h-1zM663 160h1V196.6h-1zM664 160h1V188.6h-1zM665 160h1V204.6h-1zM666 160h1V210.9h-1zM667 160h1V207.2h-1zM668 160h1V193.8h-1zM669 160h1V194.3h-1zM670 160h1V208.1h-1zM671 160h1V215.0h-1zM672 160h1V215.1h-1zM673 160h1V208.3h-1zM674 160h1V194.7h-1zM675 160h1V190.9h-1zM676 160h1V197.4h-1zM677 160h1V200.7h-1zM678 160h1V200.7h-1zM679 160h1V197.3h-1zM680 160h1V190.7h-1zM681 160h1V180.8h-1zM682 160h1V195.0h-1zM683 160h1V205.7h-1zM684 160h1V212.6h-1zM685 160h1V215.7h-1zM686 160h1V214.8h-1zM687 160h1V210.0h-1zM688 160h1V201.4h-1zM689 160h1V200.6h-1zM690 160h1V212.4h-1zM691 160h1V216.1h-1zM692 160h1V211.8h-1zM693 160h1V199.5h-1z"/>
<path fill="#5c331a" d="M616.2 205.0L617.8 205.0L617.0 225.3zM156.3 205.0L159.3 205.0L157.8 232.2zM643.4 205.0L646.5 205.0L645.0 238.4zM499.5 205.0L501.6 205.0L500.5 246.8zM605.6 205.0L609.2 205.0L607.4 243.5zM184.0 205.0L185.7 205.0L184.8 230.9zM517.9 205.0L519.9 205.0L518.9 246.1zM603.4 205.0L606.7 205.0L605.1 234.5zM169.5 205.0L173.1 205.0L171.3 225.2zM381.6 205.0L385.0 205.0L383.3 239.1zM221.9 205.0L225.6 205.0L223.8 229.6zM335.5 205.0L338.2 205.0L336.9 241.0zM101.3 205.0L104.4 205.0L102.8 234.6zM569.1 205.0L571.6 205.0L570.4 237.1zM671.8 205.0L673.6 205.0L672.7 243.8zM365.2 205.0L367.5 205.0L366.3 228.2zM210.7 205.0L214.3 205.0L212.5 226.1zM668.0 205.0L670.8 205.0L669.4 228.6zM558.0 205.0L561.0 205.0L559.5 246.5zM165.8 205.0L169.1 205.0L167.4 220.8zM190.3 205.0L192.9 205.0L191.6 229.4zM250.9 205.0L253.9 205.0L252.4 242.4zM332.8 205.0L335.6 205.0L334.2 243.5zM215.8 205.0L219.7 205.0L217.8 220.7zM304.8 205.0L308.4 205.0L306.6 227.1zM280.9 205.0L283.0 205.0L282.0 249.2zM615.7 205.0L617.5 205.0L616.6 236.2zM171.5 205.0L173.2 205.0L172.3 226.6z"/>
<path fill="#59261a" d="M113 196h1V238.2h-1zM373 196h1V240.8h-1zM487 196h1V227.1h-1zM429 196h1V244.0h-1zM489 196h1V245.6h-1zM470 196h1V234.7h-1zM422 196h1V243.2h-1zM150 196h1V239.4h-1zM344 196h1V232.7h-1zM559 196h1V244.3h-1zM154 196h1V235.5h-1zM236 196h1V225.5h-1zM579 196h1V229.0h-1zM166 196h1V238.0h-1zM243 196h1V247.8h-1zM685 196h1V232.0h-1zM468 196h1V245.4h-1zM553 196h1V226.9h-1zM243 196h1V246.5h-1zM422 196h1V246.7h-1zM240 196h1V227.1h-1zM283 196h1V242.2h-1zM363 196h1V226.0h-1zM266 196h1V233.7h-1zM136 196h1V235.1h-1zM252 196h1V235.5h-1zM622 196h1V243.1h-1zM124 196h1V247.1h-1zM288 196h1V228.3h-1zM574 196h1V227.1h-1zM478 196h1V228.8h-1zM259 196h1V234.5h-1zM617 196h1V240.3h-1zM591 196h1V246.6h-1zM179 196h1V237.8h-1zM498 196h1V228.7h-1zM549 196h1V241.6h-1zM240 196h1V241.9h-1zM339 196h1V238.2h-1zM642 196h1V236.4h-1zM204 196h1V229.5h-1zM540 196h1V229.6h-1zM283 196h1V242.6h-1zM136 196h1V238.0h-1zM85 196h1V228.2h-1z" opacity="0.7"/>
</g>
<path fill="#060d0d" d="M287 170.7h1V214h-1zM128 174.8h1V214h-1zM585 183.9h1V214h-1zM145 169.4h1V214h-1zM534 178.0h1V214h-1zM89 177.8h1V214h-1zM153 194.4h1V214h-1zM370 174.9h1V214h-1zM210 177.2h1V214h-1zM357 177.2h1V214h-1zM416 189.4h1V214h-1zM670 194.0h1V214h-1zM660 187.5h1V214h-1zM336 175.3h1V214h-1zM279 175.8h1V214h-1zM570 192.8h1V214h-1zM193 194.4h1V214h-1zM362 179.9h1V214h-1zM290 174.3h1V214h-1zM616 179.6h1V214h-1zM687 190.6h1V214h-1zM261 194.2h1V214h-1zM336 169.3h1V214h-1zM454 179.0h1V214h-1zM335 191.9h1V214h-1zM88 177.8h1V214h-1zM656 175.6h1V214h-1zM641 167.5h1V214h-1zM665 173.7h1V214h-1zM587 195.0h1V214h-1zM350 190.7h1V214h-1zM148 190.7h1V214h-1zM231 192.7h1V214h-1zM654 188.9h1V214h-1zM259 171.7h1V214h-1zM329 182.3h1V214h-1zM599 172.5h1V214h-1zM360 181.4h1V214h-1zM672 178.6h1V214h-1zM214 175.9h1V214h-1zM393 191.0h1V214h-1zM565 179.7h1V214h-1zM635 176.2h1V214h-1zM411 192.3h1V214h-1zM340 180.4h1V214h-1zM462 194.3h1V214h-1zM138 185.6h1V214h-1zM236 182.3h1V214h-1zM586 185.2h1V214h-1zM159 179.0h1V214h-1zM177 169.1h1V214h-1zM139 166.1h1V214h-1zM327 194.3h1V214h-1zM682 169.6h1V214h-1zM447 166.5h1V214h-1zM584 168.0h1V214h-1zM502 172.7h1V214h-1zM622 166.6h1V214h-1zM197 185.8h1V214h-1zM592 179.0h1V214h-1zM508 178.5h1V214h-1zM305 174.6h1V214h-1zM569 182.4h1V214h-1zM641 187.9h1V214h-1zM432 184.7h1V214h-1zM593 194.1h1V214h-1zM276 171.8h1V214h-1zM536 193.3h1V214h-1zM421 179.5h1V214h-1zM106 175.3h1V214h-1zM285 191.1h1V214h-1zM688 179.5h1V214h-1zM606 176.4h1V214h-1zM592 171.0h1V214h-1zM243 168.4h1V214h-1zM592 170.9h1V214h-1zM177 168.0h1V214h-1zM304 178.7h1V214h-1zM89 187.8h1V214h-1zM96 194.2h1V214h-1z" opacity="0.85"/>
<path fill="#602600" d="M612 214h1v104h-1zM622 214h1v104h-1zM658 214h1v104h-1zM514 214h1v104h-1zM540 214h1v104h-1zM287 214h1v104h-1zM545 214h1v104h-1zM536 214h1v104h-1zM179 214h1v104h-1zM175 214h1v104h-1zM664 214h1v104h-1zM256 214h1v104h-1zM536 214h1v104h-1zM448 214h1v104h-1zM121 214h1v104h-1zM270 214h1v104h-1zM411 214h1v104h-1zM186 214h1v104h-1zM535 214h1v104h-1zM475 214h1v104h-1zM361 214h1v104h-1zM690 214h1v104h-1zM686 214h1v104h-1zM186 214h1v104h-1zM125 214h1v104h-1zM109 214h1v104h-1zM173 214h1v104h-1zM217 214h1v104h-1zM495 214h1v104h-1zM484 214h1v104h-1zM145 214h1v104h-1zM311 214h1v104h-1zM160 214h1v104h-1zM199 214h1v104h-1zM436 214h1v104h-1zM330 214h1v104h-1z" opacity="0.6"/>
</g></g>
<rect x="79.0" y="239.80" width="613.6" height="1.50" fill="rgba(235,170,200,0.55)"/>
<rect x="79.0" y="305.20" width="613.6" height="1.60" fill="rgba(255,255,255,0.35)"/>
<rect x="79.0" y="306.80" width="613.6" height="5.00" fill="rgba(190,180,150,0.5)"/>
<rect x="79.0" y="311.80" width="613.6" height="2.40" fill="rgba(200,210,225,0.45)"/>
<filter id="cm2" filterUnits="userSpaceOnUse" x="79.0" y="332.2" width="613.6" height="156.2" color-interpolation-filters="sRGB">
<feTurbulence type="fractalNoise" baseFrequency="0.45 1.1" numOctaves="1" seed="25" result="n"/>
<feColorMatrix in="n" type="matrix" values="1 0 0 0 0 1 0 0 0 0 1 0 0 0 0 0 0 0 0 1" result="ng"/>
<feTurbulence type="fractalNoise" baseFrequency="0.6 0.025" numOctaves="2" seed="31" result="n2"/>
<feColorMatrix in="n2" type="matrix" values="1 0 0 0 0 1 0 0 0 0 1 0 0 0 0 0 0 0 0 1" result="ng2"/>
<feColorMatrix in="SourceGraphic" type="matrix" values="0 1 0 0 0 0 1 0 0 0 0 1 0 0 0 0 0 0 0 1" result="amp"/>
<feColorMatrix in="SourceGraphic" type="matrix" values="0 0 1 0 0 0 0 1 0 0 0 0 1 0 0 0 0 0 0 1" result="amp2"/>
<feComposite in="amp" in2="ng" operator="arithmetic" k1="2.4" k2="-1.2" k3="0" k4="0.5" result="nz"/>
<feComposite in="amp2" in2="ng2" operator="arithmetic" k1="1.6" k2="-0.8" k3="0" k4="0.5" result="nz2"/>
<feColorMatrix in="SourceGraphic" type="matrix" values="1 0 0 0 0 1 0 0 0 0 1 0 0 0 0 0 0 0 0 1" result="val"/>
<feComposite in="val" in2="nz" operator="arithmetic" k1="0" k2="1" k3="1" k4="-0.5" result="sum"/>
<feComposite in="sum" in2="nz2" operator="arithmetic" k1="0" k2="1" k3="1" k4="-0.5" result="sum2"/>
<feComponentTransfer in="sum2"><feFuncR type="table" tableValues="0.000 0.000 0.000 0.000 0.000 0.000 0.000 0.000 0.000 0.000 0.000 0.000 0.000 0.000 0.000 0.000 0.000 0.000 0.000 0.000 0.000 0.000 0.000 0.000 0.000 0.000 0.000 0.000 0.000 0.000 0.000 0.000 0.000 0.000 0.000 0.000 0.046 0.103 0.160 0.217 0.275 0.402 0.529 0.657 0.784 0.852 0.919 0.987 1.000 1.000 1.000 1.000 1.000 0.998 0.985 0.973 0.961 0.949 0.938 0.930 0.922 0.938 0.954 0.971 0.987 1.000 1.000 1.000 1.000 1.000 1.000 1.000 1.000 1.000 1.000 1.000 1.000 1.000 1.000 1.000 1.000"/><feFuncG type="table" tableValues="0.000 0.000 0.000 0.000 0.000 0.000 0.000 0.000 0.000 0.000 0.000 0.053 0.106 0.158 0.211 0.264 0.346 0.436 0.526 0.616 0.706 0.779 0.853 0.926 0.939 0.936 0.933 0.930 0.927 0.924 0.922 0.925 0.929 0.933 0.937 0.940 0.951 0.963 0.975 0.988 1.000 1.000 1.000 1.000 1.000 0.969 0.939 0.908 0.829 0.738 0.647 0.542 0.437 0.340 0.275 0.209 0.144 0.078 0.033 0.016 0.000 0.049 0.098 0.147 0.196 0.247 0.308 0.368 0.428 0.489 0.549 0.594 0.640 0.685 0.730 0.775 0.814 0.850 0.887 0.924 0.961"/><feFuncB type="table" tableValues="0.000 0.072 0.144 0.216 0.288 0.359 0.431 0.549 0.667 0.784 0.902 0.921 0.940 0.959 0.977 0.996 1.000 1.000 1.000 1.000 1.000 0.982 0.963 0.945 0.895 0.837 0.780 0.722 0.664 0.607 0.549 0.466 0.383 0.300 0.217 0.134 0.098 0.074 0.049 0.025 0.000 0.000 0.000 0.000 0.000 0.000 0.000 0.000 0.000 0.000 0.000 0.000 0.000 0.000 0.000 0.000 0.000 0.000 0.000 0.000 0.000 0.049 0.098 0.147 0.196 0.247 0.308 0.368 0.428 0.489 0.549 0.594 0.640 0.685 0.730 0.775 0.814 0.850 0.887 0.924 0.961"/><feFuncA type="identity"/></feComponentTransfer>
</filter>
<clipPath id="cl2"><rect x="79.0" y="332.2" width="613.6" height="156.2"/></clipPath>
<g clip-path="url(#cl2)"><g filter="url(#cm2)">
<rect x="79.0" y="332.00" width="613.6" height="38.50" fill="#0a3300"/>
<rect x="79.0" y="370.50" width="613.6" height="8.80" fill="#0d3300"/>
<rect x="79.0" y="379.30" width="613.6" height="2.00" fill="#2d3300"/>
<rect x="79.0" y="381.30" width="613.6" height="5.20" fill="#1a3800"/>
<rect x="79.0" y="386.50" width="613.6" height="2.50" fill="#403300"/>
<rect x="79.0" y="389.00" width="613.6" height="2.80" fill="#492600"/>
<rect x="79.0" y="391.80" width="613.6" height="9.50" fill="#2d3800"/>
<rect x="79.0" y="401.30" width="613.6" height="1.70" fill="#492600"/>
<rect x="79.0" y="403.00" width="613.6" height="2.00" fill="#263300"/>
<rect x="79.0" y="405.00" width="613.6" height="2.20" fill="#733300"/>
<rect x="79.0" y="407.20" width="613.6" height="5.60" fill="#494c00"/>
<rect x="79.0" y="412.80" width="613.6" height="1.90" fill="#603300"/>
<rect x="79.0" y="414.70" width="613.6" height="1.80" fill="#994000"/>
<rect x="79.0" y="416.50" width="613.6" height="2.50" fill="#403800"/>
<rect x="79.0" y="419.00" width="613.6" height="6.00" fill="#364700"/>
<rect x="79.0" y="425.00" width="613.6" height="2.50" fill="#563300"/>
<rect x="79.0" y="427.50" width="613.6" height="4.00" fill="#6c3300"/>
<rect x="79.0" y="431.50" width="613.6" height="2.50" fill="#a93800"/>
<rect x="79.0" y="434.00" width="613.6" height="4.80" fill="#7c3300"/>
<rect x="79.0" y="438.80" width="613.6" height="12.70" fill="#594700"/>
<rect x="79.0" y="451.50" width="613.6" height="4.30" fill="#933800"/>
<rect x="79.0" y="455.80" width="613.6" height="1.20" fill="#2d1a00"/>
<rect x="79.0" y="457.00" width="613.6" height="4.50" fill="#732600"/>
<rect x="79.0" y="461.50" width="613.6" height="2.30" fill="#462600"/>
<rect x="79.0" y="463.80" width="613.6" height="8.60" fill="#763800"/>
<rect x="79.0" y="472.40" width="613.6" height="2.20" fill="#862e00"/>
<rect x="79.0" y="474.60" width="613.6" height="1.40" fill="#402600"/>
<rect x="79.0" y="476.00" width="613.6" height="2.40" fill="#962e00"/>
<rect x="79.0" y="478.40" width="613.6" height="5.80" fill="#8c1a00"/>
<rect x="79.0" y="484.20" width="613.6" height="1.10" fill="#030d00"/>
<rect x="79.0" y="485.30" width="613.6" height="0.80" fill="#731a00"/>
<rect x="79.0" y="486.10" width="613.6" height="1.50" fill="#bf0d00"/>
<rect x="79.0" y="487.60" width="613.6" height="0.90" fill="#060000"/>
<filter id="bl2" filterUnits="userSpaceOnUse" x="70" y="280" width="650" height="250"><feGaussianBlur stdDeviation="0.7 1.5"/></filter>
<g filter="url(#bl2)">
<path fill="#504073" d="M80.6 326.0L83.5 326.0L82.1 365.4zM83.5 326.0L89.4 326.0L86.5 376.8zM86.7 326.0L90.9 326.0L88.8 361.6zM90.0 326.0L96.0 326.0L93.0 378.4zM93.7 326.0L98.9 326.0L96.3 352.9zM99.3 326.0L102.4 326.0L100.8 349.2zM103.5 326.0L105.7 326.0L104.6 374.3zM108.7 326.0L110.8 326.0L109.8 382.3zM111.5 326.0L114.1 326.0L112.8 360.6zM114.0 326.0L116.9 326.0L115.4 358.4zM119.4 326.0L122.3 326.0L120.9 369.7zM122.5 326.0L125.6 326.0L124.0 386.0zM125.5 326.0L129.3 326.0L127.4 348.3zM130.0 326.0L132.7 326.0L131.3 364.3zM132.1 326.0L138.6 326.0L135.4 364.2zM136.3 326.0L142.7 326.0L139.5 361.3zM139.9 326.0L146.1 326.0L143.0 371.7zM142.5 326.0L148.9 326.0L145.7 380.8zM147.6 326.0L150.2 326.0L148.9 385.0zM150.6 326.0L152.9 326.0L151.7 360.4zM151.9 326.0L156.1 326.0L154.0 369.7zM155.9 326.0L160.5 326.0L158.2 346.7zM158.4 326.0L163.4 326.0L160.9 346.0zM164.8 326.0L167.7 326.0L166.3 358.1zM168.6 326.0L172.8 326.0L170.7 373.3zM170.9 326.0L175.2 326.0L173.0 371.6zM175.8 326.0L179.9 326.0L177.8 356.3zM179.6 326.0L184.5 326.0L182.0 352.7zM183.0 326.0L187.0 326.0L185.0 358.4zM187.3 326.0L193.3 326.0L190.3 367.1zM191.8 326.0L197.8 326.0L194.8 364.8zM197.5 326.0L200.2 326.0L198.9 364.7zM198.9 326.0L204.5 326.0L201.7 367.7zM203.8 326.0L206.9 326.0L205.4 368.0zM208.6 326.0L212.9 326.0L210.7 363.4zM212.7 326.0L218.7 326.0L215.7 381.2zM218.5 326.0L222.6 326.0L220.6 365.5zM220.1 326.0L225.8 326.0L222.9 367.9zM223.9 326.0L228.6 326.0L226.3 381.8zM226.8 326.0L231.7 326.0L229.2 380.9zM229.0 326.0L235.2 326.0L232.1 348.3zM232.9 326.0L238.6 326.0L235.7 381.1zM237.6 326.0L240.2 326.0L238.9 361.4zM242.7 326.0L246.1 326.0L244.4 358.4zM247.9 326.0L250.3 326.0L249.1 360.5zM248.9 326.0L254.0 326.0L251.5 364.6zM252.3 326.0L255.8 326.0L254.1 368.0zM256.0 326.0L261.1 326.0L258.6 371.5zM259.0 326.0L265.3 326.0L262.1 375.5zM264.3 326.0L269.2 326.0L266.8 373.3zM269.6 326.0L274.1 326.0L271.8 384.6zM273.0 326.0L277.4 326.0L275.2 384.8zM278.3 326.0L281.2 326.0L279.7 364.0zM281.2 326.0L286.8 326.0L284.0 352.6zM285.1 326.0L289.8 326.0L287.4 375.4zM289.6 326.0L293.3 326.0L291.4 357.7zM294.5 326.0L297.5 326.0L296.0 383.3zM300.2 326.0L302.4 326.0L301.3 372.8zM303.3 326.0L305.3 326.0L304.3 366.7zM307.5 326.0L311.7 326.0L309.6 359.3zM312.6 326.0L316.3 326.0L314.4 381.1zM317.3 326.0L319.4 326.0L318.4 349.5zM320.6 326.0L322.9 326.0L321.8 381.5zM322.9 326.0L327.3 326.0L325.1 367.4zM327.6 326.0L332.5 326.0L330.1 355.9zM329.9 326.0L334.7 326.0L332.3 347.0zM335.1 326.0L339.6 326.0L337.3 383.4zM339.5 326.0L343.7 326.0L341.6 374.8zM341.0 326.0L347.4 326.0L344.2 364.6zM346.0 326.0L348.3 326.0L347.1 359.1zM347.8 326.0L354.3 326.0L351.0 367.4zM353.5 326.0L356.1 326.0L354.8 373.8zM356.8 326.0L362.3 326.0L359.5 360.0zM363.1 326.0L365.5 326.0L364.3 370.7zM366.5 326.0L369.3 326.0L367.9 360.5zM367.9 326.0L373.8 326.0L370.9 371.7zM373.1 326.0L375.4 326.0L374.2 373.1zM375.6 326.0L378.9 326.0L377.3 370.7zM378.9 326.0L382.8 326.0L380.9 355.0zM382.0 326.0L388.4 326.0L385.2 354.5zM386.8 326.0L389.5 326.0L388.2 358.1zM390.3 326.0L393.8 326.0L392.1 361.0zM394.5 326.0L399.3 326.0L396.9 362.5zM401.1 326.0L403.7 326.0L402.4 357.4zM402.9 326.0L407.9 326.0L405.4 354.9zM408.6 326.0L411.4 326.0L410.0 368.8zM411.9 326.0L414.3 326.0L413.1 361.7zM416.1 326.0L420.1 326.0L418.1 373.4zM422.3 326.0L424.5 326.0L423.4 382.4zM425.9 326.0L429.7 326.0L427.8 355.3zM428.4 326.0L432.6 326.0L430.5 363.6zM432.8 326.0L436.7 326.0L434.7 353.0zM438.1 326.0L441.8 326.0L439.9 374.3zM440.7 326.0L446.6 326.0L443.6 375.0zM443.4 326.0L449.4 326.0L446.4 383.4zM448.6 326.0L451.4 326.0L450.0 356.8zM453.4 326.0L455.8 326.0L454.6 354.6zM455.8 326.0L461.7 326.0L458.7 346.0zM461.5 326.0L465.3 326.0L463.4 364.3zM466.2 326.0L468.7 326.0L467.5 356.6zM467.8 326.0L472.6 326.0L470.2 367.1zM471.8 326.0L477.8 326.0L474.8 365.7zM476.0 326.0L481.4 326.0L478.7 361.9zM477.8 326.0L484.4 326.0L481.1 380.7zM484.2 326.0L488.0 326.0L486.1 370.4zM486.6 326.0L491.9 326.0L489.3 376.4zM489.0 326.0L493.9 326.0L491.5 359.3zM494.0 326.0L498.3 326.0L496.1 360.8zM498.0 326.0L502.1 326.0L500.0 375.7zM501.3 326.0L507.8 326.0L504.6 371.6zM506.4 326.0L509.8 326.0L508.1 384.0zM510.7 326.0L513.9 326.0L512.3 381.4zM511.9 326.0L518.3 326.0L515.1 351.2zM517.3 326.0L520.1 326.0L518.7 385.9zM519.4 326.0L525.0 326.0L522.2 375.8zM525.2 326.0L528.8 326.0L527.0 371.6zM529.3 326.0L534.9 326.0L532.1 361.4zM532.2 326.0L537.7 326.0L535.0 382.9zM537.1 326.0L541.9 326.0L539.5 368.4zM539.5 326.0L545.8 326.0L542.6 384.3zM544.2 326.0L548.8 326.0L546.5 385.4zM547.1 326.0L553.1 326.0L550.1 359.2zM552.5 326.0L558.7 326.0L555.6 372.4zM555.5 326.0L560.4 326.0L557.9 367.7zM559.5 326.0L561.8 326.0L560.7 364.2zM562.7 326.0L567.8 326.0L565.3 385.2zM568.4 326.0L571.8 326.0L570.1 373.5zM570.7 326.0L575.2 326.0L572.9 372.5zM572.8 326.0L577.7 326.0L575.2 356.4zM576.8 326.0L582.0 326.0L579.4 361.6zM581.2 326.0L583.6 326.0L582.4 371.2zM584.4 326.0L590.0 326.0L587.2 359.5zM588.9 326.0L594.7 326.0L591.8 385.2zM593.1 326.0L596.0 326.0L594.6 371.8zM598.1 326.0L601.1 326.0L599.6 372.0zM599.2 326.0L605.2 326.0L602.2 360.0zM605.7 326.0L609.4 326.0L607.5 371.8zM608.0 326.0L612.4 326.0L610.2 354.4zM611.6 326.0L613.7 326.0L612.6 364.5zM612.3 326.0L617.7 326.0L615.0 375.8zM616.1 326.0L620.3 326.0L618.2 375.3zM617.7 326.0L623.5 326.0L620.6 381.0zM623.9 326.0L627.1 326.0L625.5 382.4zM626.1 326.0L629.4 326.0L627.8 352.3zM630.0 326.0L633.1 326.0L631.6 369.8zM632.1 326.0L638.5 326.0L635.3 355.1zM637.3 326.0L643.1 326.0L640.2 373.4zM642.6 326.0L645.1 326.0L643.8 372.0zM646.2 326.0L651.6 326.0L648.9 361.2zM650.4 326.0L653.9 326.0L652.1 350.8zM654.0 326.0L658.6 326.0L656.3 361.1zM658.4 326.0L660.5 326.0L659.4 374.4zM659.4 326.0L665.9 326.0L662.7 355.1zM664.0 326.0L669.2 326.0L666.6 358.9zM666.9 326.0L671.4 326.0L669.2 355.7zM668.7 326.0L674.9 326.0L671.8 346.4zM674.1 326.0L680.4 326.0L677.2 371.2zM679.8 326.0L685.3 326.0L682.5 348.2zM685.8 326.0L689.3 326.0L687.5 359.1zM689.8 326.0L693.3 326.0L691.5 370.7zM691.5 326.0L697.1 326.0L694.3 350.7z"/>
<path fill="#594073" d="M84.9 326.0L88.1 326.0L86.5 356.7zM91.4 326.0L94.7 326.0L93.0 357.5zM94.8 326.0L97.8 326.0L96.3 343.5zM133.6 326.0L137.1 326.0L135.4 349.7zM137.7 326.0L141.3 326.0L139.5 348.1zM141.3 326.0L144.7 326.0L143.0 353.8zM144.0 326.0L147.5 326.0L145.7 358.9zM180.7 326.0L183.4 326.0L182.0 343.4zM188.7 326.0L192.0 326.0L190.3 351.3zM193.1 326.0L196.5 326.0L194.8 350.0zM200.2 326.0L203.2 326.0L201.7 351.6zM214.1 326.0L217.4 326.0L215.7 359.1zM221.4 326.0L224.5 326.0L222.9 351.8zM225.0 326.0L227.6 326.0L226.3 359.4zM227.9 326.0L230.6 326.0L229.2 358.9zM234.1 326.0L237.3 326.0L235.7 359.0zM250.1 326.0L252.9 326.0L251.5 349.9zM257.2 326.0L260.0 326.0L258.6 353.7zM260.4 326.0L263.8 326.0L262.1 356.0zM265.4 326.0L268.1 326.0L266.8 354.7zM270.6 326.0L273.1 326.0L271.8 360.9zM274.0 326.0L276.4 326.0L275.2 361.1zM282.5 326.0L285.5 326.0L284.0 343.3zM286.1 326.0L288.7 326.0L287.4 355.9zM328.7 326.0L331.4 326.0L330.1 345.1zM336.1 326.0L338.6 326.0L337.3 360.3zM342.5 326.0L346.0 326.0L344.2 349.9zM349.2 326.0L352.8 326.0L351.0 351.5zM358.0 326.0L361.0 326.0L359.5 347.4zM369.2 326.0L372.5 326.0L370.9 353.9zM383.4 326.0L386.9 326.0L385.2 344.4zM395.6 326.0L398.2 326.0L396.9 348.8zM404.1 326.0L406.8 326.0L405.4 344.6zM442.0 326.0L445.3 326.0L443.6 355.7zM444.8 326.0L448.1 326.0L446.4 360.3zM468.9 326.0L471.5 326.0L470.2 351.3zM473.1 326.0L476.4 326.0L474.8 350.6zM477.2 326.0L480.2 326.0L478.7 348.5zM479.3 326.0L482.9 326.0L481.1 358.8zM487.8 326.0L490.7 326.0L489.3 356.4zM490.1 326.0L492.8 326.0L491.5 347.0zM502.8 326.0L506.3 326.0L504.6 353.8zM513.4 326.0L516.9 326.0L515.1 342.6zM520.7 326.0L523.7 326.0L522.2 356.1zM530.6 326.0L533.6 326.0L532.1 348.2zM533.4 326.0L536.5 326.0L535.0 360.0zM538.2 326.0L540.8 326.0L539.5 352.0zM540.9 326.0L544.3 326.0L542.6 360.8zM545.3 326.0L547.8 326.0L546.5 361.4zM548.5 326.0L551.7 326.0L550.1 346.9zM553.9 326.0L557.3 326.0L555.6 354.2zM556.6 326.0L559.3 326.0L557.9 351.6zM563.9 326.0L566.7 326.0L565.3 361.3zM571.7 326.0L574.2 326.0L572.9 354.3zM573.9 326.0L576.6 326.0L575.2 345.4zM578.0 326.0L580.8 326.0L579.4 348.3zM585.6 326.0L588.7 326.0L587.2 347.1zM590.2 326.0L593.4 326.0L591.8 361.3zM600.5 326.0L603.8 326.0L602.2 347.4zM613.5 326.0L616.5 326.0L615.0 356.1zM619.0 326.0L622.2 326.0L620.6 358.9zM633.6 326.0L637.1 326.0L635.3 344.7zM638.6 326.0L641.8 326.0L640.2 354.8zM647.4 326.0L650.3 326.0L648.9 348.1zM655.1 326.0L657.6 326.0L656.3 348.0zM660.9 326.0L664.4 326.0L662.7 344.7zM665.2 326.0L668.0 326.0L666.6 346.8zM667.9 326.0L670.4 326.0L669.2 345.0zM675.5 326.0L678.9 326.0L677.2 353.6zM692.8 326.0L695.9 326.0L694.3 342.3z"/>
</g>
<path fill="#6c2600" d="M194 332h1v73h-1zM100 332h1v40h-1zM364 332h1v40h-1zM542 332h1v60h-1zM316 332h1v60h-1zM438 332h1v50h-1zM661 332h1v50h-1zM447 332h1v73h-1zM411 332h1v73h-1zM390 332h1v73h-1zM316 332h1v40h-1zM197 332h1v50h-1zM538 332h1v40h-1zM205 332h1v73h-1zM126 332h1v60h-1zM668 332h1v60h-1zM512 332h1v60h-1zM322 332h1v40h-1zM281 332h1v60h-1zM238 332h1v60h-1zM640 332h1v50h-1zM608 332h1v60h-1zM434 332h1v60h-1zM216 332h1v73h-1zM104 332h1v40h-1zM424 332h1v60h-1zM445 332h1v60h-1zM158 332h1v40h-1zM679 332h1v73h-1zM580 332h1v73h-1zM642 332h1v40h-1zM361 332h1v50h-1zM108 332h1v60h-1zM218 332h1v40h-1zM365 332h1v73h-1zM504 332h1v60h-1zM214 332h1v73h-1zM413 332h1v50h-1zM444 332h1v73h-1zM441 332h1v73h-1zM215 332h1v50h-1zM563 332h1v60h-1zM646 332h1v40h-1zM620 332h1v73h-1zM582 332h1v40h-1zM379 332h1v73h-1zM234 332h1v50h-1zM575 332h1v73h-1zM102 332h1v50h-1zM416 332h1v60h-1zM545 332h1v73h-1zM623 332h1v73h-1zM479 332h1v73h-1zM676 332h1v73h-1zM448 332h1v50h-1zM89 332h1v73h-1zM406 332h1v73h-1zM458 332h1v40h-1zM152 332h1v40h-1zM498 332h1v50h-1zM647 332h1v40h-1zM363 332h1v73h-1zM260 332h1v50h-1zM345 332h1v73h-1zM478 332h1v73h-1zM546 332h1v40h-1zM363 332h1v60h-1zM232 332h1v73h-1zM84 332h1v73h-1zM269 332h1v60h-1z" opacity="0.65"/>
</g></g>
<rect x="79.0" y="405.00" width="613.6" height="2.20" fill="rgba(190,190,150,0.45)"/>
<rect x="79.0" y="414.70" width="613.6" height="1.80" fill="rgba(150,130,70,0.5)"/>
<rect x="79.0" y="455.80" width="613.6" height="1.20" fill="rgba(90,80,30,0.6)"/>
<rect x="79.0" y="457.00" width="613.6" height="6.80" fill="rgba(210,210,190,0.45)"/>
<rect x="79.0" y="474.60" width="613.6" height="1.40" fill="rgba(90,90,40,0.3)"/>
<rect x="79.0" y="478.40" width="613.6" height="5.80" fill="rgba(255,255,210,0.5)"/>
<rect x="79.0" y="486.10" width="613.6" height="1.50" fill="rgba(128,0,0,0.75)"/>
<rect x="551" y="478.6" width="51" height="1.8" fill="rgba(20,60,230,0.75)"/>
<rect x="590" y="477.8" width="14" height="1.2" fill="rgba(20,60,230,0.5)"/>
<text x="70.8" y="325.5" font-size="8.8" text-anchor="end" >0</text>
<text x="70.8" y="294.3" font-size="8.8" text-anchor="end" >2</text>
<text x="70.8" y="263.0" font-size="8.8" text-anchor="end" >4</text>
<text x="70.8" y="231.8" font-size="8.8" text-anchor="end" >6</text>
<text x="70.8" y="200.5" font-size="8.8" text-anchor="end" >8</text>
<text x="70.8" y="169.3" font-size="8.8" text-anchor="end" >10</text>
<text x="70.8" y="491.5" font-size="8.8" text-anchor="end" >0</text>
<text x="70.8" y="460.3" font-size="8.8" text-anchor="end" >2</text>
<text x="70.8" y="429.0" font-size="8.8" text-anchor="end" >4</text>
<text x="70.8" y="397.8" font-size="8.8" text-anchor="end" >6</text>
<text x="70.8" y="366.5" font-size="8.8" text-anchor="end" >8</text>
<text x="70.8" y="335.3" font-size="8.8" text-anchor="end" >10</text>
<text x="70.8" y="129.5" font-size="8.8" text-anchor="end" >5</text>
<text x="70.8" y="160.9" font-size="8.8" text-anchor="end" >-5</text>
<text x="70.8" y="500.5" font-size="8.8" text-anchor="end" >5</text>
<text x="70.8" y="531.5" font-size="8.8" text-anchor="end" >-5</text>
<text x="79.5" y="548.2" font-size="8.8" text-anchor="middle" >0</text>
<text x="141.5" y="548.2" font-size="8.8" text-anchor="middle" >1</text>
<text x="204.5" y="548.2" font-size="8.8" text-anchor="middle" >2</text>
<text x="266.5" y="548.2" font-size="8.8" text-anchor="middle" >3</text>
<text x="328.5" y="548.2" font-size="8.8" text-anchor="middle" >4</text>
<text x="391.5" y="548.2" font-size="8.8" text-anchor="middle" >5</text>
<text x="453.5" y="548.2" font-size="8.8" text-anchor="middle" >6</text>
<text x="515.5" y="548.2" font-size="8.8" text-anchor="middle" >7</text>
<text x="578.5" y="548.2" font-size="8.8" text-anchor="middle" >8</text>
<text x="640.5" y="548.2" font-size="8.8" text-anchor="middle" >9</text>
<text x="703.5" y="548.2" font-size="8.8" text-anchor="middle" >10</text>
<text x="376.0" y="558.0" font-size="9.0" text-anchor="start" textLength="48.3" lengthAdjust="spacing">Time&#160;&#160;(min)</text>
<text transform="translate(50.6 142.2) rotate(-90)" font-size="9.0" text-anchor="middle" textLength="31.0" lengthAdjust="spacing">ch.1(V)</text>
<text transform="translate(50.8 243.3) rotate(-90)" font-size="9.0" text-anchor="middle" textLength="18.6" lengthAdjust="spacing">ch.1</text>
<text transform="translate(58.6 231.6) rotate(-90)" font-size="9.5" text-anchor="middle" textLength="71.6" lengthAdjust="spacing">Frequency&#160;&#160;(kHz)</text>
<text transform="translate(50.8 409.4) rotate(-90)" font-size="9.0" text-anchor="middle" textLength="18.6" lengthAdjust="spacing">ch.2</text>
<text transform="translate(58.6 397.7) rotate(-90)" font-size="9.5" text-anchor="middle" textLength="71.6" lengthAdjust="spacing">Frequency&#160;&#160;(kHz)</text>
<text transform="translate(50.6 513.1) rotate(-90)" font-size="9.0" text-anchor="middle" textLength="30.6" lengthAdjust="spacing">ch.3(V)</text>
<text x="79.8" y="122.9" font-size="10.8" text-anchor="start" textLength="66.8" lengthAdjust="spacing">VLF&#160;&#160;Spectra</text>
<text x="250.5" y="123.0" font-size="8.8" text-anchor="start" textLength="56.5" lengthAdjust="spacing">Jan.&#160;&#160;28,&#160;&#160;2026</text>
<text x="344.0" y="123.0" font-size="8.8" text-anchor="start" textLength="54.6" lengthAdjust="spacing">station=ATH</text>
<text x="437.7" y="123.0" font-size="8.8" text-anchor="start" textLength="91" lengthAdjust="spacing">start&#160;&#160;UT&#160;&#160;=&#160;&#160;&#160;16:&#160;10:&#160;0</text>
<defs><linearGradient id="cbg" x1="0" y1="1" x2="0" y2="0">
<stop offset="0.000" stop-color="rgb(0,0,0)"/>
<stop offset="0.025" stop-color="rgb(0,0,36)"/>
<stop offset="0.050" stop-color="rgb(0,0,73)"/>
<stop offset="0.075" stop-color="rgb(0,0,110)"/>
<stop offset="0.100" stop-color="rgb(0,0,170)"/>
<stop offset="0.125" stop-color="rgb(0,0,230)"/>
<stop offset="0.150" stop-color="rgb(0,26,239)"/>
<stop offset="0.175" stop-color="rgb(0,53,249)"/>
<stop offset="0.200" stop-color="rgb(0,88,255)"/>
<stop offset="0.225" stop-color="rgb(0,134,255)"/>
<stop offset="0.250" stop-color="rgb(0,180,255)"/>
<stop offset="0.275" stop-color="rgb(0,217,245)"/>
<stop offset="0.300" stop-color="rgb(0,239,228)"/>
<stop offset="0.325" stop-color="rgb(0,237,198)"/>
<stop offset="0.350" stop-color="rgb(0,236,169)"/>
<stop offset="0.375" stop-color="rgb(0,235,140)"/>
<stop offset="0.400" stop-color="rgb(0,236,97)"/>
<stop offset="0.425" stop-color="rgb(0,238,55)"/>
<stop offset="0.450" stop-color="rgb(11,242,24)"/>
<stop offset="0.475" stop-color="rgb(40,248,12)"/>
<stop offset="0.500" stop-color="rgb(70,255,0)"/>
<stop offset="0.525" stop-color="rgb(135,255,0)"/>
<stop offset="0.550" stop-color="rgb(200,255,0)"/>
<stop offset="0.575" stop-color="rgb(234,239,0)"/>
<stop offset="0.600" stop-color="rgb(255,211,0)"/>
<stop offset="0.625" stop-color="rgb(255,165,0)"/>
<stop offset="0.650" stop-color="rgb(255,111,0)"/>
<stop offset="0.675" stop-color="rgb(251,69,0)"/>
<stop offset="0.700" stop-color="rgb(245,36,0)"/>
<stop offset="0.725" stop-color="rgb(239,8,0)"/>
<stop offset="0.750" stop-color="rgb(235,0,0)"/>
<stop offset="0.775" stop-color="rgb(243,25,25)"/>
<stop offset="0.800" stop-color="rgb(251,50,50)"/>
<stop offset="0.825" stop-color="rgb(255,78,78)"/>
<stop offset="0.850" stop-color="rgb(255,109,109)"/>
<stop offset="0.875" stop-color="rgb(255,140,140)"/>
<stop offset="0.900" stop-color="rgb(255,163,163)"/>
<stop offset="0.925" stop-color="rgb(255,186,186)"/>
<stop offset="0.950" stop-color="rgb(255,207,207)"/>
<stop offset="0.975" stop-color="rgb(255,226,226)"/>
<stop offset="1.000" stop-color="rgb(255,245,245)"/>
</linearGradient></defs>
<rect x="719" y="203.0" width="8.5" height="106.5" fill="url(#cbg)"/>
<text x="735.0" y="204.1" font-size="7.5" text-anchor="start" >-3</text>
<text x="735.0" y="231.1" font-size="7.5" text-anchor="start" >-4</text>
<text x="735.0" y="258.1" font-size="7.5" text-anchor="start" >-5</text>
<text x="735.0" y="285.1" font-size="7.5" text-anchor="start" >-6</text>
<text x="735.0" y="312.1" font-size="7.5" text-anchor="start" >-7</text>
<path d="M727.5 201.5V309.5M727.5 201.5h5M727.5 228.5h5M727.5 255.5h5M727.5 282.5h5M727.5 309.5h5" stroke="#444" stroke-width="1.2" fill="none"/>
<text transform="translate(750.2 263.1) rotate(-90)" font-size="8.0" text-anchor="middle">log(PSD)(V<tspan dy="-2.8" font-size="5">2</tspan><tspan dy="2.8">/Hz)</tspan></text>
<rect x="719" y="369.0" width="8.5" height="106.5" fill="url(#cbg)"/>
<text x="735.0" y="370.1" font-size="7.5" text-anchor="start" >-3</text>
<text x="735.0" y="397.1" font-size="7.5" text-anchor="start" >-4</text>
<text x="735.0" y="424.1" font-size="7.5" text-anchor="start" >-5</text>
<text x="735.0" y="451.1" font-size="7.5" text-anchor="start" >-6</text>
<text x="735.0" y="478.1" font-size="7.5" text-anchor="start" >-7</text>
<path d="M727.5 367.5V475.5M727.5 367.5h5M727.5 394.5h5M727.5 421.5h5M727.5 448.5h5M727.5 475.5h5" stroke="#444" stroke-width="1.2" fill="none"/>
<text transform="translate(750.2 429.1) rotate(-90)" font-size="8.0" text-anchor="middle">log(PSD)(V<tspan dy="-2.8" font-size="5">2</tspan><tspan dy="2.8">/Hz)</tspan></text>
</svg></body></html>
